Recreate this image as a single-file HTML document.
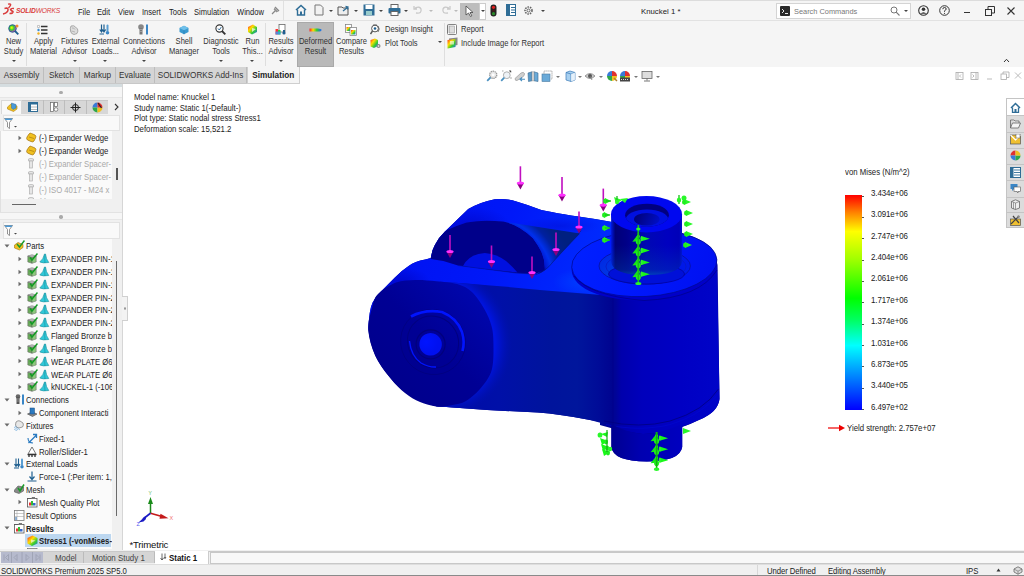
<!DOCTYPE html>
<html><head><meta charset="utf-8">
<style>
*{margin:0;padding:0;box-sizing:border-box}
html,body{width:1024px;height:576px;overflow:hidden;background:#fff;font-family:"Liberation Sans",sans-serif;color:#222;font-size:8px}
.a{position:absolute;white-space:nowrap}
.arr{width:0;height:0;border-left:2px solid transparent;border-right:2px solid transparent;border-top:2px solid #444}
.menu{top:8px;font-size:8.8px;color:#222;line-height:9px;transform:scaleX(0.86);transform-origin:0 0}
.rb{font-size:8.7px;color:#333;text-align:center;line-height:10px;transform:scaleX(0.87);transform-origin:50% 0}
.rb2{font-size:8.7px;color:#333;line-height:9px;transform:scaleX(0.87);transform-origin:0 0}
.tab{position:absolute;top:67px;white-space:nowrap;height:16px;background:#d5d5d5;border-right:1px solid #bdbdbd;font-size:8.2px;color:#333;text-align:center;line-height:18px}
.tr{font-size:8.9px;line-height:10px;color:#222;transform:scaleX(0.87);transform-origin:0 0}
.vt{font-size:9px;line-height:10px;color:#222;transform:scaleX(0.865);transform-origin:0 0}
.lg{font-size:9.1px;letter-spacing:-0.1px;line-height:10px;color:#222;transform:scaleX(0.87);transform-origin:0 0}
.bt{font-size:9px;line-height:10px;color:#444;transform:scaleX(0.88);transform-origin:0 0}
.st{font-size:9px;line-height:10px;color:#222;letter-spacing:-0.1px;transform:scaleX(0.86);transform-origin:0 0}
</style></head><body>
<!-- backgrounds -->
<div class="a" style="left:0;top:0;width:1024px;height:21px;background:#f5f5f5;border-bottom:1px solid #e2e2e2"></div>
<div class="a" style="left:0;top:21px;width:1024px;height:46px;background:#f5f5f5"></div>
<div class="a" style="left:0;top:67px;width:1024px;height:1.5px;background:#d6d6d6"></div>
<div class="a" style="left:0;top:67px;width:1024px;height:17px;background:#fff"></div>
<div class="a" style="left:0;top:84px;width:122px;height:466px;background:#f0f0f0"></div>
<div class="tab" style="left:0;width:44px">Assembly</div>
<div class="tab" style="left:44px;width:36px">Sketch</div>
<div class="tab" style="left:80px;width:36px">Markup</div>
<div class="tab" style="left:116px;width:39px">Evaluate</div>
<div class="tab" style="left:155px;width:92px">SOLIDWORKS Add-Ins</div>
<div class="tab" style="left:246.5px;width:53.5px;background:#f5f5f5;font-weight:bold;border:1px solid #cfcfcf;border-top:none;height:16.5px;color:#222;line-height:18px">Simulation</div>
<div class="a" style="left:0;top:83px;width:247px;height:1px;background:#c8c8c8"></div>
<!-- ============ TITLE BAR ============ -->
<div class="a" style="left:0;top:0;width:1024px;height:1px;background:#dcdcdc"></div>
<svg class="a" style="left:2px;top:3px" width="13" height="12" viewBox="0 0 13 12">
<path d="M6 1.2 Q9.5 0.5 8.5 2.5 L6.5 5.2" stroke="#d93b3b" stroke-width="1.3" fill="none"/>
<path d="M2.5 5.5 L4.5 5 Q7 5.5 5.5 8.5 Q4 10.5 1 11" stroke="#d93b3b" stroke-width="1.5" fill="none"/>
<path d="M12 5.5 Q9 5 8.5 6.5 Q9.5 8 11 8.5 Q11.5 10.5 7.5 10.5" stroke="#d93b3b" stroke-width="1.5" fill="none"/>
</svg>
<div class="a" style="left:16px;top:6.5px;color:#d93b3b;font-size:7.8px;font-style:italic;letter-spacing:-0.2px;line-height:8px;transform:scaleX(0.86);transform-origin:0 0"><b>SOLID</b>WORKS</div>
<div class="a menu" style="left:78px">File</div>
<div class="a menu" style="left:97px">Edit</div>
<div class="a menu" style="left:118px">View</div>
<div class="a menu" style="left:142px">Insert</div>
<div class="a menu" style="left:169px">Tools</div>
<div class="a menu" style="left:194px">Simulation</div>
<div class="a menu" style="left:236.5px">Window</div>
<svg class="a" style="left:271px;top:6px" width="9" height="9" viewBox="0 0 9 9"><path d="M4 1 L8 5 M3 3 L6 6 M1 8 L4 5" stroke="#888" stroke-width="1.2" fill="none"/><path d="M3.5 1.5 L7.5 5.5 L6 6 L3 3z" fill="#999"/></svg>
<div class="a" style="left:283px;top:1px;width:1px;height:19px;background:#e0e0e0"></div>
<!-- quick access -->
<svg class="a" style="left:295px;top:4px" width="12" height="12" viewBox="0 0 12 12"><path d="M1 6 L6 1.5 L11 6" stroke="#2f6d96" stroke-width="1.6" fill="none"/><path d="M2.5 5.5 V11 H9.5 V5.5" stroke="#2f6d96" stroke-width="1.4" fill="none"/><rect x="5" y="7.5" width="2" height="3.5" fill="#2f6d96"/></svg>
<svg class="a" style="left:314px;top:4px" width="10" height="12" viewBox="0 0 10 12"><path d="M1 1 H6.5 L9 3.5 V11 H1z" stroke="#777" stroke-width="1" fill="#f2f2f2"/></svg>
<svg class="a" style="left:337px;top:4px" width="13" height="12" viewBox="0 0 13 12"><path d="M1 3 H5 L6 4 H11 V11 H1z" stroke="#555" stroke-width="1" fill="#eee"/><path d="M6 7 L11 3 M8.5 2.5 L11 3 L10.5 5.5" stroke="#2f6d96" stroke-width="1.3" fill="none"/></svg>
<svg class="a" style="left:363px;top:4px" width="12" height="12" viewBox="0 0 12 12"><rect x="0.5" y="0.5" width="11" height="11" fill="#2f6d96"/><rect x="2.5" y="1" width="7" height="4" fill="#fff"/><rect x="3" y="7" width="6" height="4" fill="#9cc"/></svg>
<svg class="a" style="left:388px;top:4px" width="13" height="12" viewBox="0 0 13 12"><rect x="3" y="0.5" width="7" height="4" fill="#fff" stroke="#666"/><rect x="0.5" y="4" width="12" height="5.5" rx="1" fill="#2f6d96"/><rect x="3" y="7.5" width="7" height="4" fill="#fff" stroke="#666"/></svg>
<svg class="a" style="left:413px;top:5px" width="10" height="10" viewBox="0 0 10 10"><path d="M3 8 Q9 9 8 4 Q7 1 2 3 M1 1 V4 H4" stroke="#c9c9c9" stroke-width="1.3" fill="none"/></svg>
<svg class="a" style="left:441px;top:5px" width="10" height="10" viewBox="0 0 10 10"><path d="M7 8 Q1 9 2 4 Q3 1 8 3 M9 1 V4 H6" stroke="#c9c9c9" stroke-width="1.3" fill="none"/></svg>
<div class="a" style="left:460px;top:3px;width:19px;height:17px;background:#bdbdbd"></div>
<div class="a" style="left:479px;top:3px;width:7px;height:17px;background:#fff;border:1px solid #ccc"></div>
<svg class="a" style="left:465px;top:5px" width="9" height="12" viewBox="0 0 9 12"><path d="M1 1 V10 L3.5 8 L5.5 11.5 L6.8 10.8 L5 7.5 H8z" fill="#fff" stroke="#444" stroke-width="0.8"/></svg>
<svg class="a" style="left:490px;top:4px" width="7" height="13" viewBox="0 0 7 13"><rect x="0.5" y="0.5" width="6" height="12" rx="3" fill="#222"/><circle cx="3.5" cy="3.3" r="1.6" fill="#e02020"/><circle cx="3.5" cy="6.5" r="1.3" fill="#4a1a1a"/><circle cx="3.5" cy="9.7" r="1.6" fill="#2a8a2a"/></svg>
<svg class="a" style="left:506px;top:4px" width="10" height="12" viewBox="0 0 10 12"><rect x="0.5" y="0.5" width="9" height="11" fill="#fff" stroke="#2f6d96"/><rect x="1" y="1" width="3" height="10" fill="#2f6d96"/><path d="M5 3.5 H9 M5 6 H9 M5 8.5 H9" stroke="#2f6d96"/></svg>
<svg class="a" style="left:523px;top:5px" width="11" height="11" viewBox="0 0 11 11"><circle cx="5.5" cy="5.5" r="3.5" fill="none" stroke="#666" stroke-width="1.6" stroke-dasharray="1.5 1"/><circle cx="5.5" cy="5.5" r="1.5" fill="none" stroke="#666" stroke-width="1"/></svg>
<div class="a arr" style="left:329px;top:10px"></div>
<div class="a arr" style="left:354px;top:10px"></div>
<div class="a arr" style="left:379px;top:10px"></div>
<div class="a arr" style="left:404px;top:10px"></div>
<div class="a arr" style="left:429px;top:10px;border-top-color:#bbb"></div>
<div class="a arr" style="left:454px;top:10px;border-top-color:#bbb"></div>
<div class="a arr" style="left:481px;top:10px"></div>
<div class="a arr" style="left:541px;top:10px"></div>
<div class="a" style="left:641px;top:6.5px;font-size:7.8px;line-height:9px;color:#222">Knuckel 1 *</div>
<!-- search -->
<div class="a" style="left:776px;top:3px;width:135px;height:16px;background:#fff;border:1px solid #d4d4d4"></div>
<svg class="a" style="left:780px;top:6px" width="10" height="10" viewBox="0 0 10 10"><rect width="10" height="10" rx="1" fill="#2b2b2b"/><path d="M2 3 L4 5 L2 7 M5 7.5 H8" stroke="#fff" stroke-width="0.9" fill="none"/></svg>
<div class="a" style="left:794px;top:6.5px;font-size:7.4px;color:#777">Search Commands</div>
<svg class="a" style="left:890px;top:5.5px" width="10" height="10" viewBox="0 0 10 10"><circle cx="4" cy="4" r="3" fill="none" stroke="#777" stroke-width="1"/><path d="M6.2 6.2 L9.5 9.5" stroke="#777" stroke-width="1.1"/></svg>
<div class="a arr" style="left:904px;top:10px"></div>
<svg class="a" style="left:918px;top:5px" width="11" height="11" viewBox="0 0 11 11"><circle cx="5.5" cy="5.5" r="4.8" fill="none" stroke="#333" stroke-width="1.1"/><circle cx="5.5" cy="4.3" r="1.8" fill="#333"/><path d="M2.3 8.8 Q5.5 5.5 8.7 8.8" fill="#333"/></svg>
<svg class="a" style="left:939px;top:5px" width="11" height="11" viewBox="0 0 11 11"><circle cx="5.5" cy="5.5" r="4.8" fill="none" stroke="#333" stroke-width="1"/><path d="M3.8 4.2 Q3.8 2.5 5.5 2.5 Q7.2 2.5 7.2 4 Q7.2 5 5.5 5.8 V6.8" stroke="#333" stroke-width="1" fill="none"/><circle cx="5.5" cy="8.3" r="0.6" fill="#333"/></svg>
<div class="a" style="left:964px;top:12px;width:6px;height:1px;background:#333"></div>
<svg class="a" style="left:985px;top:6px" width="10" height="10" viewBox="0 0 10 10"><rect x="0.5" y="3.5" width="6" height="6" fill="none" stroke="#333"/><path d="M3 3.5 V0.5 H9.5 V7 H6.5" fill="none" stroke="#333"/></svg>
<svg class="a" style="left:1007px;top:7px" width="8" height="8" viewBox="0 0 8 8"><path d="M0.5 0.5 L7.5 7.5 M7.5 0.5 L0.5 7.5" stroke="#333" stroke-width="1.1"/></svg>

<svg class="a" style="left:1003px;top:58px" width="7" height="5" viewBox="0 0 7 5"><path d="M1 4 L3.5 1.3 L6 4" stroke="#333" stroke-width="1" fill="none"/></svg>

<!-- ============ RIBBON ============ -->
<div class="a" style="left:26px;top:23px;width:1px;height:43px;background:#dedede"></div>
<div class="a" style="left:265px;top:23px;width:1px;height:43px;background:#dedede"></div>
<div class="a" style="left:444px;top:23px;width:1px;height:43px;background:#dedede"></div>
<div class="a" style="left:297px;top:22px;width:37px;height:45px;background:#b9b9b9;border:1px solid #a9a9a9"></div>
<div class="a rb" style="left:-7px;top:36px;width:41px">New<br>Study</div>
<div class="a rb" style="left:23px;top:36px;width:41px">Apply<br>Material</div>
<div class="a rb" style="left:52px;top:36px;width:45px">Fixtures<br>Advisor</div>
<div class="a rb" style="left:83px;top:36px;width:45px">External<br>Loads...</div>
<div class="a rb" style="left:118px;top:36px;width:52px">Connections<br>Advisor</div>
<div class="a rb" style="left:159px;top:36px;width:50px">Shell<br>Manager</div>
<div class="a rb" style="left:195px;top:36px;width:52px">Diagnostic<br>Tools</div>
<div class="a rb" style="left:232px;top:36px;width:41px">Run<br>This...</div>
<div class="a rb" style="left:259px;top:36px;width:44px">Results<br>Advisor</div>
<div class="a rb" style="left:292px;top:36px;width:47px">Deformed<br>Result</div>
<div class="a rb" style="left:328px;top:36px;width:47px">Compare<br>Results</div>
<div class="a rb2" style="left:384.5px;top:24.5px">Design Insight</div>
<div class="a rb2" style="left:384.5px;top:38.5px">Plot Tools</div>
<div class="a rb2" style="left:460.5px;top:24.5px">Report</div>
<div class="a rb2" style="left:460.5px;top:38.5px">Include Image for Report</div>
<div class="a arr" style="left:11.5px;top:59.5px"></div>
<div class="a arr" style="left:72.5px;top:59.5px"></div>
<div class="a arr" style="left:103px;top:59.5px"></div>
<div class="a arr" style="left:141.5px;top:59.5px"></div>
<div class="a arr" style="left:218.5px;top:59.5px"></div>
<div class="a arr" style="left:250px;top:59.5px"></div>
<div class="a arr" style="left:279px;top:59.5px"></div>
<div class="a arr" style="left:438px;top:41px"></div>
<!-- ribbon icons -->
<svg class="a" style="left:8px;top:24px" width="11" height="11" viewBox="0 0 11 11"><defs><radialGradient id="rg1" cx="0.4" cy="0.4" r="0.6"><stop offset="0" stop-color="#ff0"/><stop offset="0.5" stop-color="#3c3"/><stop offset="1" stop-color="#c3c"/></radialGradient></defs><circle cx="4.5" cy="4.5" r="3.8" fill="url(#rg1)" stroke="#1f5f8f" stroke-width="0.9"/><path d="M7 7 L10.3 10.3" stroke="#1f5f8f" stroke-width="1.8"/><circle cx="9" cy="2" r="1.5" fill="#f08a30"/></svg>
<svg class="a" style="left:37px;top:25px" width="11" height="10" viewBox="0 0 11 10"><circle cx="1.5" cy="1.5" r="1.2" fill="#fff" stroke="#888" stroke-width="0.6"/><circle cx="1.5" cy="5" r="1.2" fill="#3a8dd0"/><circle cx="1.5" cy="8.5" r="1.2" fill="#f0b020"/><path d="M4 1.5 H10.5 M4 5 H10.5 M4 8.5 H10.5" stroke="#333" stroke-width="1.3"/></svg>
<svg class="a" style="left:69px;top:25px" width="10" height="10" viewBox="0 0 10 10"><path d="M2 1 Q5 0 6.5 2 L8.5 4 Q9.5 6 8 8.5 L5 9.5 Q2 9 1.5 6 Q1 3 2 1z" fill="#ddd" stroke="#999" stroke-width="0.8"/><path d="M3 3 Q5 2.5 6 4.5 M2.5 6 L6 7" stroke="#999" stroke-width="0.6" fill="none"/></svg>
<svg class="a" style="left:99px;top:24px" width="11" height="11" viewBox="0 0 11 11"><path d="M2.5 0.5 V7.5 M0.8 5.5 L2.5 8 L4.2 5.5 M0.5 10 H5" stroke="#1f5f8f" stroke-width="1.2" fill="none"/><path d="M5 0.5 V7.5 M3.3 5.5 L5 8 L6.7 5.5" stroke="#1f5f8f" stroke-width="1.2" fill="none"/><rect x="7.5" y="0.5" width="2" height="7" rx="1" fill="#5a9fd4"/><circle cx="8.5" cy="8.8" r="1.8" fill="#3a86c6"/></svg>
<svg class="a" style="left:137px;top:24px" width="12" height="11" viewBox="0 0 12 11"><circle cx="4" cy="3" r="2.8" fill="#888"/><rect x="2.5" y="4" width="3" height="6.5" fill="#777"/><path d="M2.5 5.5 H5.5 M2.5 7.5 H5.5" stroke="#bbb" stroke-width="0.6"/><rect x="9" y="0.5" width="2" height="10" fill="#3a86c6"/></svg>
<svg class="a" style="left:179px;top:25px" width="10" height="10" viewBox="0 0 10 10"><path d="M0.5 3 L5 0.8 L9.5 3 V7 L5 9.2 L0.5 7z" fill="#3a9ad0"/><path d="M0.5 3 L5 5.2 L9.5 3 L5 0.8z" fill="#6fc0ea"/><path d="M5 5.2 V9.2" stroke="#2a7ab0" stroke-width="0.6"/></svg>
<svg class="a" style="left:215px;top:24px" width="11" height="11" viewBox="0 0 11 11"><circle cx="4.5" cy="4.5" r="3.6" fill="#fff" stroke="#333" stroke-width="1.1"/><path d="M7 7 L10.3 10.3" stroke="#333" stroke-width="1.8"/><path d="M3 4.5 L4.3 6 L6.3 3" stroke="#1f5f8f" stroke-width="0.9" fill="none"/></svg>
<svg class="a" style="left:247px;top:24px" width="11" height="11" viewBox="0 0 11 11"><defs><linearGradient id="lg2" x1="0" y1="0" x2="1" y2="1"><stop offset="0" stop-color="#f22"/><stop offset="0.35" stop-color="#fd0"/><stop offset="0.65" stop-color="#3c3"/><stop offset="1" stop-color="#26f"/></linearGradient></defs><path d="M1 3 L6 0.5 L10 3 V8 L5 10.5 L1 8z" fill="url(#lg2)"/><path d="M5 4 L9 5 L5 8" fill="#fff" opacity="0.7"/></svg>
<svg class="a" style="left:275px;top:24px" width="12" height="11" viewBox="0 0 12 11"><rect x="4" y="0.5" width="6" height="7.5" fill="#fff" stroke="#666" stroke-width="0.8"/><rect x="0.5" y="5" width="2.5" height="5.5" fill="#f33"/><rect x="3" y="6" width="2.5" height="4.5" fill="#3c3"/><rect x="0.5" y="7.5" width="5" height="3" fill="#39f" opacity="0.8"/><rect x="8" y="6" width="2" height="4" fill="#1f5f8f"/><circle cx="9" cy="9" r="1.6" fill="#1f5f8f"/></svg>
<svg class="a" style="left:309px;top:27px" width="13" height="6" viewBox="0 0 13 6"><defs><linearGradient id="lg3" x1="0" x2="1"><stop offset="0" stop-color="#f22"/><stop offset="0.3" stop-color="#fd0"/><stop offset="0.6" stop-color="#3c3"/><stop offset="1" stop-color="#26f"/></linearGradient></defs><path d="M0.5 1.5 H9 Q12.5 1.5 12.5 3 Q12.5 4.5 9 4.5 H0.5z" fill="url(#lg3)"/></svg>
<svg class="a" style="left:345px;top:24px" width="12" height="12" viewBox="0 0 12 12"><rect x="0.5" y="0.5" width="6" height="8" fill="#fff" stroke="#777" stroke-width="0.7"/><rect x="1.5" y="3" width="4" height="4" fill="url(#lg2)"/><rect x="5" y="3.5" width="6.5" height="8" fill="#fff" stroke="#777" stroke-width="0.7"/><rect x="6" y="6" width="4.5" height="4.5" fill="url(#lg2)"/></svg>
<svg class="a" style="left:370px;top:24px" width="11" height="11" viewBox="0 0 11 11"><circle cx="5" cy="4.5" r="3.4" fill="#fff" stroke="#555" stroke-width="1"/><path d="M2.5 7 L0.5 10" stroke="#555" stroke-width="1.4"/><path d="M3 1 H7 M8 2 Q10.5 5 8 8" stroke="#555" stroke-width="0.8" fill="none"/><circle cx="5" cy="4.5" r="1.3" fill="#1f5f8f"/></svg>
<svg class="a" style="left:370px;top:38px" width="11" height="11" viewBox="0 0 11 11"><path d="M0.5 2 L5 0.5 L8 2 V8 L4 10 L0.5 8.5z" fill="url(#lg2)"/><circle cx="8.5" cy="8" r="2" fill="#888"/><circle cx="8.5" cy="8" r="0.8" fill="#fff"/></svg>
<svg class="a" style="left:447px;top:24px" width="10" height="11" viewBox="0 0 10 11"><rect x="0.5" y="0.5" width="9" height="10" rx="1" fill="#fff" stroke="#666" stroke-width="0.8"/><rect x="2.5" y="2" width="5" height="7" fill="#ddd" stroke="#888" stroke-width="0.5"/><path d="M0.5 2 H1.5 M0.5 4 H1.5 M0.5 6 H1.5 M0.5 8 H1.5" stroke="#333" stroke-width="0.6"/></svg>
<svg class="a" style="left:447px;top:37px" width="11" height="12" viewBox="0 0 11 12"><path d="M2 1.5 L10.5 0.5 V8 L2 10z" fill="#888"/><path d="M0.5 3 L8.5 2 V10 L0.5 11.5z" fill="url(#lg2)"/><rect x="3" y="4" width="4" height="3.5" fill="#fff" opacity="0.6"/></svg>

<!-- ============ VIEWPORT OVERLAYS ============ -->
<div class="a vt" style="left:134px;top:91.9px">Model name: Knuckel 1</div>
<div class="a vt" style="left:134px;top:102.7px">Study name: Static 1(-Default-)</div>
<div class="a vt" style="left:134px;top:113.4px">Plot type: Static nodal stress Stress1</div>
<div class="a vt" style="left:134px;top:124px">Deformation scale: 15,521.2</div>
<!-- legend -->
<div class="a vt" style="left:845px;top:167px">von Mises (N/m^2)</div>
<div class="a" style="left:845px;top:195px;width:17px;height:215px;background:linear-gradient(to bottom,#ff0000 0%,#ff8000 8%,#ffff00 17%,#a0ff00 30%,#00ff00 48%,#00ff60 58%,#00ffff 70%,#0090ff 83%,#0000ff 100%)"></div>
<div class="a lg" style="left:871px;top:188.0px">3.434e+06</div>
<div class="a" style="left:862px;top:195.5px;width:2px;height:1px;background:#555"></div>
<div class="a lg" style="left:871px;top:209.3px">3.091e+06</div>
<div class="a" style="left:862px;top:216.8px;width:2px;height:1px;background:#555"></div>
<div class="a lg" style="left:871px;top:230.7px">2.747e+06</div>
<div class="a" style="left:862px;top:238.2px;width:2px;height:1px;background:#555"></div>
<div class="a lg" style="left:871px;top:252.1px">2.404e+06</div>
<div class="a" style="left:862px;top:259.6px;width:2px;height:1px;background:#555"></div>
<div class="a lg" style="left:871px;top:273.4px">2.061e+06</div>
<div class="a" style="left:862px;top:280.9px;width:2px;height:1px;background:#555"></div>
<div class="a lg" style="left:871px;top:294.8px">1.717e+06</div>
<div class="a" style="left:862px;top:302.2px;width:2px;height:1px;background:#555"></div>
<div class="a lg" style="left:871px;top:316.1px">1.374e+06</div>
<div class="a" style="left:862px;top:323.6px;width:2px;height:1px;background:#555"></div>
<div class="a lg" style="left:871px;top:337.5px">1.031e+06</div>
<div class="a" style="left:862px;top:345.0px;width:2px;height:1px;background:#555"></div>
<div class="a lg" style="left:871px;top:358.8px">6.873e+05</div>
<div class="a" style="left:862px;top:366.3px;width:2px;height:1px;background:#555"></div>
<div class="a lg" style="left:871px;top:380.1px">3.440e+05</div>
<div class="a" style="left:862px;top:387.6px;width:2px;height:1px;background:#555"></div>
<div class="a lg" style="left:871px;top:401.5px">6.497e+02</div>
<div class="a" style="left:862px;top:409.0px;width:2px;height:1px;background:#555"></div>
<svg class="a" style="left:828px;top:424px" width="18" height="8" viewBox="0 0 18 8"><path d="M0 4 H12" stroke="#e00" stroke-width="1.2"/><path d="M11 0.8 L17 4 L11 7.2z" fill="#e00"/></svg>
<div class="a vt" style="left:847px;top:423px">Yield strength: 2.757e+07</div>
<!-- triad -->
<svg class="a" style="left:128px;top:484px" width="60" height="48" viewBox="128 484 60 48">
<path d="M150.5 513.3 V502" stroke="#1a8a1a" stroke-width="1.5"/><path d="M148 504 L150.5 497 L153 504z" fill="#1a8a1a"/>
<path d="M150.5 513.3 L162 516.5" stroke="#c41a1a" stroke-width="1.7"/><path d="M160.5 513.8 L168.5 518.2 L159.5 518.8z" fill="#c41a1a"/>
<path d="M150.5 513.3 L143 519" stroke="#1a1ac4" stroke-width="1.7"/><path d="M145.5 516 L138.5 522.5 L143.5 521.5 L146 519z" fill="#1a1ac4"/>
<text x="148.6" y="494.5" font-size="5" fill="#5ab85a" font-family="Liberation Sans">Y</text>
<text x="169.5" y="520" font-size="5.5" fill="#f07070" font-family="Liberation Sans">X</text>
<text x="136.5" y="526" font-size="5.5" fill="#5a5af0" font-family="Liberation Sans">Z</text>
</svg>
<div class="a" style="left:129.5px;top:538.5px;font-size:9.6px;line-height:11px;color:#111;letter-spacing:-0.2px">*Trimetric</div>
<!-- view toolbar -->
<svg class="a" style="left:486px;top:70px" width="12" height="12" viewBox="0 0 12 12"><circle cx="7.2" cy="4.8" r="3.6" fill="#e8e8e8" stroke="#9a9a9a" stroke-width="1.3" stroke-dasharray="1.4 0.6"/><circle cx="7.2" cy="4.8" r="1.4" fill="#fff"/><path d="M4.6 7.4 L1.2 10.8" stroke="#4a90c0" stroke-width="1.8"/></svg>
<svg class="a" style="left:500px;top:70px" width="12" height="12" viewBox="0 0 12 12"><circle cx="6.8" cy="5.2" r="3.4" fill="#eef2f6" stroke="#a8a8a8" stroke-width="0.9"/><path d="M4.3 7.7 L1.2 10.8" stroke="#4a90c0" stroke-width="1.8"/><path d="M2 1 H3.5 M9 0.8 H11 V2.5 M11 7 V9" stroke="#888" stroke-width="0.7"/></svg>
<svg class="a" style="left:514px;top:70px" width="12" height="12" viewBox="0 0 12 12"><path d="M1 8.5 L7 3 Q9.5 1.5 10.5 3.5 Q11 5.5 8 7.5 L3 10.5 Q1 11 1 8.5z" fill="#d0d0d0" stroke="#9a9a9a" stroke-width="0.7"/><path d="M6 9.3 H11 M8 7.5 L6 9.3 L8 11" stroke="#4a90c0" stroke-width="1.1" fill="none"/></svg>
<svg class="a" style="left:527px;top:70px" width="12" height="12" viewBox="0 0 12 12"><path d="M1 3 L5 1.8 V10.8 L1.5 11.5z" fill="#5a9ac8" stroke="#3a6a90" stroke-width="0.6"/><path d="M7 1.8 L11 3 V11.5 L7 10.8z" fill="#6aaad8" stroke="#3a6a90" stroke-width="0.6"/><path d="M5 1.8 H7 V10.8 H5z" fill="#e0e0e0" stroke="#999" stroke-width="0.5"/></svg>
<svg class="a" style="left:541px;top:70px" width="12" height="12" viewBox="0 0 12 12"><rect x="1" y="4" width="8" height="7.5" fill="#6aaad8" stroke="#4a7aa0" stroke-width="0.6"/><path d="M3 3.5 V1 H11 V9 H9.5" fill="none" stroke="#777" stroke-width="0.7" stroke-dasharray="1.2 0.8"/></svg>
<svg class="a" style="left:565px;top:70px" width="11" height="12" viewBox="0 0 11 12"><path d="M1 2.5 L5 1 L10 2.5 V10 L6 11.5 L1 10z" fill="#a8d0f0" stroke="#3a7ab8" stroke-width="0.7"/><path d="M1 2.5 L6 4 L10 2.5 M6 4 V11.5" stroke="#3a7ab8" stroke-width="0.7" fill="none"/><path d="M6 4 L10 2.5 V10 L6 11.5z" fill="#fff" opacity="0.7"/></svg>
<svg class="a" style="left:584px;top:71px" width="12" height="10" viewBox="0 0 12 10"><path d="M1 5 Q6 0 11 5 Q6 10 1 5z" fill="#ccc" stroke="#777" stroke-width="0.7"/><circle cx="6" cy="5" r="2" fill="#555"/><path d="M6 5 L8 9" stroke="#777" stroke-width="0.8"/></svg>
<svg class="a" style="left:606px;top:70px" width="12" height="12" viewBox="0 0 12 12"><path d="M6 6 L6 1 A5 5 0 0 0 1 6z" fill="#3a7ad8"/><path d="M6 6 L1 6 A5 5 0 0 0 6 11z" fill="#2ea84a"/><path d="M6 6 L6 11 A5 5 0 0 0 11 6z" fill="#f0c020"/><path d="M6 6 L11 6 A5 5 0 0 0 6 1z" fill="#e03030"/><path d="M8 8 L11 11" stroke="#b08030" stroke-width="1.5"/></svg>
<svg class="a" style="left:619px;top:70px" width="12" height="12" viewBox="0 0 12 12"><path d="M6 6 L6 1 A5 5 0 0 0 1 6z" fill="#3a7ad8"/><path d="M6 6 L1 6 A5 5 0 0 0 6 11z" fill="#2ea84a"/><path d="M6 6 L6 11 A5 5 0 0 0 11 6z" fill="#f0c020"/><path d="M6 6 L11 6 A5 5 0 0 0 6 1z" fill="#e03030"/><rect x="1" y="7.5" width="10" height="4" fill="#444"/><path d="M2 9.5 H10" stroke="#fff" stroke-width="0.8" stroke-dasharray="1 1"/></svg>
<svg class="a" style="left:641px;top:70px" width="12" height="12" viewBox="0 0 12 12"><rect x="1" y="1.5" width="10" height="7" fill="#ddd" stroke="#666" stroke-width="0.8"/><path d="M6 8.5 V10.5 M3 11 H9" stroke="#666" stroke-width="0.9"/></svg>
<div class="a arr" style="left:556px;top:75.5px;border-top-color:#777"></div>
<div class="a arr" style="left:578px;top:75.5px;border-top-color:#777"></div>
<div class="a arr" style="left:599px;top:75.5px;border-top-color:#777"></div>
<div class="a arr" style="left:634px;top:75.5px;border-top-color:#777"></div>
<div class="a arr" style="left:656px;top:75.5px;border-top-color:#777"></div>
<!-- viewport window controls -->
<svg class="a" style="left:952px;top:70px" width="72" height="12" viewBox="0 0 72 12"><g stroke="#aaa" stroke-width="0.8" fill="none">
<rect x="4" y="2.5" width="7" height="7"/><path d="M6 2.5 V9.5 M9 4.5 L7.5 6 L9 7.5"/>
<rect x="19" y="2.5" width="7" height="7"/><path d="M24 2.5 V9.5 M20.5 4.5 L22 6 L20.5 7.5"/>
<path d="M35 9 H40"/>
<rect x="49" y="4" width="5.5" height="5.5"/><path d="M51 4 V2 H57 V7.5 H54.5"/>
<path d="M63 2.5 L69 8.5 M69 2.5 L63 8.5"/></g></svg>
<!-- right task pane -->
<div class="a" style="left:1006px;top:98px;width:18px;height:130px;background:#dcdcdc;border:1px solid #c4c4c4;border-right:none"></div>
<div class="a" style="left:1007px;top:99px;width:17px;height:16.3px;background:#fff"></div>
<div class="a" style="left:1007px;top:115.3px;width:17px;height:1px;background:#c4c4c4"></div>
<div class="a" style="left:1007px;top:131.5px;width:17px;height:1px;background:#c4c4c4"></div>
<div class="a" style="left:1007px;top:147.8px;width:17px;height:1px;background:#c4c4c4"></div>
<div class="a" style="left:1007px;top:164.0px;width:17px;height:1px;background:#c4c4c4"></div>
<div class="a" style="left:1007px;top:180.3px;width:17px;height:1px;background:#c4c4c4"></div>
<div class="a" style="left:1007px;top:196.5px;width:17px;height:1px;background:#c4c4c4"></div>
<div class="a" style="left:1007px;top:212.3px;width:17px;height:1px;background:#c4c4c4"></div>
<svg class="a" style="left:1010px;top:101.7px" width="11" height="11" viewBox="0 0 11 11"><path d="M1 6 L5.5 1.5 L10 6" stroke="#2f6d96" stroke-width="1.5" fill="none"/><path d="M2.5 5.5 V10.5 H8.5 V5.5" stroke="#2f6d96" stroke-width="1.3" fill="none"/><rect x="4.5" y="7" width="2" height="3.5" fill="#2f6d96"/></svg>
<svg class="a" style="left:1010px;top:117.9px" width="11" height="11" viewBox="0 0 11 11"><path d="M0.5 2 H4 L5 3 H9 V5 M0.5 2 V10 H8.5 L10.5 5 H2.5 L0.5 10" stroke="#666" stroke-width="0.8" fill="#f5f5f5"/></svg>
<svg class="a" style="left:1010px;top:134.2px" width="11" height="11" viewBox="0 0 11 11"><rect x="0.5" y="1" width="10" height="9" fill="#f0c030" stroke="#555" stroke-width="0.7"/><path d="M0.5 1 L5.5 6 L10.5 1" stroke="#fff" stroke-width="1.2" fill="none"/><rect x="6" y="0" width="4" height="4" fill="#fff" stroke="#555" stroke-width="0.5"/></svg>
<svg class="a" style="left:1010px;top:150.4px" width="11" height="11" viewBox="0 0 11 11"><path d="M5.5 5.5 L5.5 0.5 A5 5 0 0 0 0.5 5.5z" fill="#e03030"/><path d="M5.5 5.5 L0.5 5.5 A5 5 0 0 0 5.5 10.5z" fill="#3a7ad8"/><path d="M5.5 5.5 L5.5 10.5 A5 5 0 0 0 10.5 5.5z" fill="#2ea84a"/><path d="M5.5 5.5 L10.5 5.5 A5 5 0 0 0 5.5 0.5z" fill="#f0c020"/></svg>
<svg class="a" style="left:1010px;top:166.7px" width="11" height="11" viewBox="0 0 11 11"><rect x="0.5" y="0.5" width="10" height="10" fill="#fff" stroke="#2f6d96"/><rect x="0.5" y="0.5" width="3" height="10" fill="#2f6d96"/><path d="M4 3 H10 M4 5.5 H10 M4 8 H10" stroke="#2f6d96" stroke-width="0.9"/></svg>
<svg class="a" style="left:1010px;top:182.9px" width="11" height="11" viewBox="0 0 11 11"><rect x="0.5" y="1" width="7" height="5" fill="#3a86c6"/><path d="M2 6 L2 8 L4 6" fill="#3a86c6"/><rect x="4" y="4" width="6.5" height="4.5" fill="#fff" stroke="#555" stroke-width="0.6"/><path d="M8 8.5 V10 L6.5 8.5" stroke="#555" stroke-width="0.6" fill="#fff"/></svg>
<svg class="a" style="left:1010px;top:198.9px" width="11" height="11" viewBox="0 0 11 11"><path d="M1.5 2.5 L5.5 0.8 L9.5 2.5 V9 L5.5 10.5 L1.5 9z" fill="#eee" stroke="#666" stroke-width="0.8"/><path d="M1.5 2.5 L5.5 4 L9.5 2.5 M5.5 4 V10.5 M3.5 3.3 V9.8" stroke="#666" stroke-width="0.6" fill="none"/></svg>
<svg class="a" style="left:1010px;top:214.7px" width="11" height="11" viewBox="0 0 11 11"><rect x="0.5" y="4" width="10" height="6.5" fill="#f0c030" stroke="#555" stroke-width="0.7"/><path d="M1 9 L9 1 M3 1 L9 8" stroke="#444" stroke-width="1.2"/><circle cx="8.5" cy="1.8" r="1.3" fill="#888"/></svg>

<svg class="a" style="left:0;top:0" width="1024" height="576" viewBox="0 0 1024 576">
<defs>
<linearGradient id="armFace" x1="460" y1="0" x2="720" y2="0" gradientUnits="userSpaceOnUse">
<stop offset="0" stop-color="#000ca8"/><stop offset="0.15" stop-color="#0010a8"/><stop offset="0.35" stop-color="#00149c"/><stop offset="0.45" stop-color="#00169c"/><stop offset="0.53" stop-color="#000c98"/><stop offset="0.585" stop-color="#000490"/><stop offset="0.6" stop-color="#000498"/><stop offset="0.62" stop-color="#0000ac"/><stop offset="0.7" stop-color="#0000bc"/><stop offset="0.85" stop-color="#0000c4"/><stop offset="1" stop-color="#0004c8"/>
</linearGradient>
<linearGradient id="topBright" x1="380" y1="200" x2="620" y2="290" gradientUnits="userSpaceOnUse">
<stop offset="0" stop-color="#0010f0"/><stop offset="0.5" stop-color="#0018f8"/><stop offset="1" stop-color="#0030ff"/>
</linearGradient>
<linearGradient id="flange" x1="580" y1="240" x2="716" y2="290" gradientUnits="userSpaceOnUse">
<stop offset="0" stop-color="#0020ff"/><stop offset="0.45" stop-color="#0018fc"/><stop offset="1" stop-color="#0010f0"/>
</linearGradient>
<linearGradient id="boss" x1="611" y1="0" x2="682" y2="0" gradientUnits="userSpaceOnUse">
<stop offset="0" stop-color="#0018e0"/><stop offset="0.06" stop-color="#000078"/><stop offset="0.22" stop-color="#000088"/><stop offset="0.5" stop-color="#0008b4"/><stop offset="0.8" stop-color="#0000c0"/><stop offset="0.96" stop-color="#0000b8"/><stop offset="1" stop-color="#0010d0"/></linearGradient>
<linearGradient id="bossbot" x1="0" y1="245" x2="0" y2="276" gradientUnits="userSpaceOnUse"><stop offset="0" stop-color="#0060a0" stop-opacity="0"/><stop offset="0.8" stop-color="#0060b0" stop-opacity="0.25"/><stop offset="1" stop-color="#00a0c0" stop-opacity="0.45"/></linearGradient>
<linearGradient id="bboss" x1="611" y1="0" x2="683" y2="0" gradientUnits="userSpaceOnUse">
<stop offset="0" stop-color="#000090"/><stop offset="0.4" stop-color="#0000b0"/><stop offset="1" stop-color="#0000c0"/>
</linearGradient>
<radialGradient id="web" cx="486" cy="284" r="90" gradientUnits="userSpaceOnUse">
<stop offset="0.665" stop-color="#00008a"/><stop offset="0.69" stop-color="#0018d0"/><stop offset="0.75" stop-color="#0030ec"/><stop offset="0.84" stop-color="#0020a0"/><stop offset="0.92" stop-color="#002088"/><stop offset="1" stop-color="#002080"/></radialGradient>
<radialGradient id="hole" cx="428" cy="340" r="12" gradientUnits="userSpaceOnUse"><stop offset="0" stop-color="#0014ff"/><stop offset="1" stop-color="#0010f0"/></radialGradient>
<linearGradient id="cbore" x1="0" y1="204" x2="0" y2="227" gradientUnits="userSpaceOnUse"><stop offset="0" stop-color="#000070"/><stop offset="0.42" stop-color="#0000a0"/><stop offset="0.5" stop-color="#0010e0"/><stop offset="1" stop-color="#0018f0"/></linearGradient>
<linearGradient id="ihole" x1="634" y1="213" x2="660" y2="226" gradientUnits="userSpaceOnUse"><stop offset="0" stop-color="#000070"/><stop offset="1" stop-color="#0010d0"/></linearGradient>
<radialGradient id="recess" cx="620" cy="280" r="50" gradientUnits="userSpaceOnUse"><stop offset="0" stop-color="#0040e0"/><stop offset="1" stop-color="#0018e8"/></radialGradient>
<radialGradient id="band" cx="0.5" cy="0.5" r="0.5"><stop offset="0.7" stop-color="#0014e0"/><stop offset="0.76" stop-color="#0012c8"/><stop offset="0.9" stop-color="#0010b0" stop-opacity="0"/></radialGradient>
<clipPath id="armclip"><path d="M440 281.7 Q480 284 540 290 L620 296.5 L620 428 L590 420 Q560 414 537.8 412.5 L487 410 L436.2 406.2 Z"/></clipPath>
<linearGradient id="lugface" x1="390" y1="390" x2="480" y2="300" gradientUnits="userSpaceOnUse"><stop offset="0" stop-color="#00008c"/><stop offset="0.5" stop-color="#000094"/><stop offset="1" stop-color="#0006ac"/></linearGradient>
<radialGradient id="hilite" cx="0.5" cy="0.5" r="0.5"><stop offset="0" stop-color="#0040ff" stop-opacity="0.9"/><stop offset="1" stop-color="#0040ff" stop-opacity="0"/></radialGradient>
<radialGradient id="shade" cx="0.5" cy="0.5" r="0.5"><stop offset="0" stop-color="#0000b8" stop-opacity="0.6"/><stop offset="1" stop-color="#0000b8" stop-opacity="0"/></radialGradient>
<clipPath id="backtopclip"><path d="M430.8 258.1 Q432 250 435 244.8 Q439 237 445 231.5 L468.2 209.1 Q480 202 494.8 199.2 Q506 198 516.4 201.6 Q528 205 541.3 210 Q560 214 595 219 L612 222 L612 236 L580 233.5 L503 221.6 Q483 219.5 466.5 222.4 Q455 226 447 230 Z"/></clipPath>
<clipPath id="topclip"><path d="M368.3 330 Q369 310 372.5 302.8 Q376 296 380.8 291.7 L394.7 277.8 Q401 271 408.6 266 Q415 261 425.3 259.4 L430.8 258.1 L458 265.5 L516 273 L536 274.2 Q546 271 552 263 L580 233.5 L612 234 L612 300 L540 290 L440 281.7 L380 300 Z"/></clipPath>
</defs>
<!-- base silhouette -->
<path d="M368.3 330 Q369 310 372.5 302.8 Q376 296 380.8 291.7 L394.7 277.8 Q401 271 408.6 266 Q415 261 425.3 259.4 L430.8 258.1 Q432 250 435 244.8 Q439 237 445 231.5 L468.2 209.1 Q480 202 494.8 199.2 Q506 198 516.4 201.6 Q528 205 541.3 210 Q560 214 595 219 L612 222 L612 214 L682 214 L682 233 Q700 238 710 247 Q717 255 717 263 L717.5 265 L719.5 399 Q718 412 700 419.5 Q690 424.5 682.2 427 L682.2 447 Q680 461.4 646.8 461.4 Q613 461.4 611.4 447 L611.4 424 L590 420 Q560 414 537.8 412.5 L487 410 L436.2 406.2 Q420 402 410.8 396 Q398 388 390.5 378.2 Q380 366 375.2 355.4 Q370 343 368.3 330 Z" fill="#000090"/>
<!-- top bright surfaces (back lug top, back arm top, front lug top, front arm top) -->
<path d="M368.3 330 Q369 310 372.5 302.8 Q376 296 380.8 291.7 L394.7 277.8 Q401 271 408.6 266 Q415 261 425.3 259.4 L430.8 258.1 Q432 250 435 244.8 Q439 237 445 231.5 L468.2 209.1 Q480 202 494.8 199.2 Q506 198 516.4 201.6 Q528 205 541.3 210 Q560 214 595 219 L612 222 L612 300 L500 287 L440 282 L380 300 Z" fill="url(#topBright)"/>
<g clip-path="url(#topclip)"><ellipse cx="585" cy="282" rx="32" ry="14" fill="url(#hilite)"/><ellipse cx="400" cy="282" rx="30" ry="16" fill="url(#shade)"/></g>
<g clip-path="url(#backtopclip)"><ellipse cx="470" cy="228" rx="42" ry="22" fill="url(#shade)"/><ellipse cx="560" cy="226" rx="40" ry="9" fill="url(#shade)" opacity="0.5"/></g>
<!-- dark inner face of back lug -->
<path d="M430.8 258.5 Q432 250 435 244.8 Q439 237 445 231.5 L447 230 Q455 226 466.5 222.4 Q483 219.5 503 221.6 Q518 224 533 238.2 Q538 245 541.3 251.5 Q546 262 544 268 Q541 273.5 532 274 L516 273 L458 265.5 L443.3 261 L430.8 259 Z" fill="#00008a"/>
<!-- web -->
<path d="M503 221.6 L580 233.5 L552 263 Q546 271 538 274 Q546 266 544 260 L541.3 251.5 Q538 245 533 238.2 Q518 224 503 221.6 Z" fill="url(#web)"/>
<path d="M581.1 230.7 L552 263 Q546 271 536 274.5" stroke="#001888" stroke-width="0.7" fill="none"/>
<!-- pin through -->
<path d="M463 266 Q469 254 484.8 253 Q503 254 517.5 272.6 L471 267.4 Z" fill="#0010e0"/>
<path d="M458 265.5 L516 273 L536 274.2" stroke="#0010a0" stroke-width="0.6" fill="none"/>
<!-- arm front face -->
<path d="M440 281.7 Q480 284 540 290 L620 296.5 L620 428 L590 420 Q560 414 537.8 412.5 L487 410 L436.2 406.2 Z" fill="url(#armFace)"/>
<g clip-path="url(#armclip)"><ellipse cx="436" cy="339" rx="82" ry="88" transform="rotate(-39.6 436 339)" fill="url(#band)"/></g>
<!-- front lug end face -->
<path d="M368.3 330.0 C367.8 322.1 370.4 314.0 372.0 308.0 C373.6 302.0 374.0 298.2 378.0 294.0 C382.0 289.8 389.8 284.8 396.0 282.5 C402.2 280.2 408.8 280.2 415.5 280.0 C422.2 279.8 429.4 280.6 436.4 281.2 C443.3 281.9 451.3 282.2 457.2 284.0 C463.1 285.8 467.5 287.8 472.0 292.0 C476.5 296.2 481.1 303.3 484.3 309.0 C487.6 314.7 490.0 320.3 491.5 326.0 C493.0 331.7 493.3 335.8 493.4 343.0 C493.5 350.2 493.9 361.7 492.0 369.0 C490.1 376.3 486.0 381.7 481.7 387.0 C477.4 392.3 471.3 397.9 466.0 401.0 C460.7 404.1 455.0 404.6 450.0 405.5 C445.0 406.4 441.2 407.1 436.2 406.5 C431.2 405.9 425.2 404.2 420.0 402.0 C414.8 399.8 409.9 397.0 405.0 393.0 C400.1 389.0 395.5 384.5 390.5 378.2 C385.5 371.9 378.9 363.4 375.2 355.4 C371.5 347.4 368.8 337.9 368.3 330.0 Z" fill="url(#lugface)"/>
<!-- lug left rim highlight -->

<!-- hole rings -->
<ellipse cx="433" cy="342" rx="32" ry="33" transform="rotate(-40 433 342)" fill="none" stroke="#000078" stroke-width="0.8" opacity="0.7"/>
<ellipse cx="433" cy="342" rx="25" ry="26.5" transform="rotate(-40 433 342)" fill="none" stroke="#000080" stroke-width="1"/>
<path d="M411 316.5 Q425 309 442 312 Q457 318 462 332 Q465 342 462.5 351" stroke="#0014ff" stroke-width="2.6" fill="none"/>
<path d="M409.5 341 Q411 356 421 363 Q429 367.5 436 367" stroke="#0014ff" stroke-width="1.4" fill="none"/>
<ellipse cx="430.6" cy="344.3" rx="14.5" ry="14.5" fill="none" stroke="#00007c" stroke-width="1.2"/>
<ellipse cx="430.6" cy="344.3" rx="11.2" ry="11.3" transform="rotate(-30 430.6 344.3)" fill="url(#hole)"/>
<!-- cylinder body -->
<path d="M600 290 L717 262 L719.5 399 Q718 412 700 419.5 Q672 433 643 434 Q620 431 601.7 425.5 L600 425 Z" fill="url(#armFace)"/>
<path d="M604 421 Q640 429 670 421 Q704 411 718.5 389" stroke="#000080" stroke-width="0.8" fill="none"/><path d="M606 424.5 Q640 432 670 424.5 Q704 414 718.5 393" stroke="#0008d0" stroke-width="1.2" fill="none" opacity="0.6"/><path d="M613 298 V427" stroke="#000088" stroke-width="0.6" opacity="0.6"/>
<!-- flange -->
<ellipse cx="644.3" cy="267" rx="72.7" ry="33" transform="rotate(-3 644.3 267)" fill="#0000c8"/>
<ellipse cx="644.3" cy="263.5" rx="72.7" ry="33" transform="rotate(-3 644.3 263.5)" fill="url(#flange)"/>
<ellipse cx="644.3" cy="263.5" rx="72.7" ry="33" transform="rotate(-3 644.3 263.5)" fill="none" stroke="#00088c" stroke-width="0.7"/><path d="M574 276 Q590 296 644 300.5 Q700 298 717 270" stroke="#000088" stroke-width="0.7" fill="none"/>
<ellipse cx="644.7" cy="266" rx="45.7" ry="18.2" fill="url(#recess)" stroke="#0810a0" stroke-width="0.8"/>
<ellipse cx="646" cy="266.5" rx="40" ry="14.5" fill="none" stroke="#0a18c0" stroke-width="0.7"/>
<!-- boss -->
<ellipse cx="646.5" cy="274" rx="38" ry="10" fill="#0010d8" stroke="#00009a" stroke-width="0.7"/>
<path d="M611.1 214.2 V262 Q613 275 646.5 275 Q680 275 682 262 V214.2 Z" fill="url(#boss)"/>
<path d="M611.1 245 V262 Q613 275 646.5 275 Q680 275 682 262 V245 Z" fill="url(#bossbot)"/>
<ellipse cx="646.5" cy="214.2" rx="35.5" ry="18.2" fill="#0008f0"/>
<clipPath id="cbclip"><ellipse cx="647" cy="215.2" rx="21.9" ry="11.5"/></clipPath><ellipse cx="647" cy="215.2" rx="21.9" ry="11.5" fill="#000080"/><g clip-path="url(#cbclip)"><ellipse cx="647" cy="220" rx="21.5" ry="10.5" fill="#0010e0"/></g>
<ellipse cx="646.8" cy="219.3" rx="12.8" ry="6.3" fill="url(#ihole)"/>
<!-- bottom boss -->
<path d="M611.4 424 V447 Q613 461.4 646.8 461.4 Q680 461.4 682.2 447 V424 Q660 434 643 434 Q625 432 611.4 424 Z" fill="url(#bboss)"/>

<rect x="519.6" y="166.3" width="1.6" height="17.7" fill="#c010c0"/>
<path d="M516.8 183.0 L524.0 183.0 L520.4 189.5 Z" fill="#8a0080"/>
<ellipse cx="520.4" cy="183.0" rx="3.6" ry="1.6" fill="#ff30ff"/>
<rect x="561.2" y="177" width="1.6" height="19.1" fill="#c010c0"/>
<path d="M558.4 195.1 L565.6 195.1 L562.0 201.6 Z" fill="#8a0080"/>
<ellipse cx="562.0" cy="195.1" rx="3.6" ry="1.6" fill="#ff30ff"/>
<rect x="602.5" y="188.6" width="1.6" height="17.5" fill="#c010c0"/>
<path d="M599.7 205.1 L606.9 205.1 L603.3 211.6 Z" fill="#8a0080"/>
<ellipse cx="603.3" cy="205.1" rx="3.6" ry="1.6" fill="#ff30ff"/>
<rect x="449.2" y="235" width="1.6" height="17.5" fill="#c010c0"/>
<path d="M446.4 251.5 L453.6 251.5 L450.0 258.0 Z" fill="#8a0080"/>
<ellipse cx="450.0" cy="251.5" rx="3.6" ry="1.6" fill="#ff30ff"/>
<rect x="490.7" y="245.5" width="1.6" height="17.0" fill="#c010c0"/>
<path d="M487.9 261.5 L495.1 261.5 L491.5 268.0 Z" fill="#8a0080"/>
<ellipse cx="491.5" cy="261.5" rx="3.6" ry="1.6" fill="#ff30ff"/>
<rect x="531.2" y="256.5" width="1.6" height="17.0" fill="#c010c0"/>
<path d="M528.4 272.5 L535.6 272.5 L532.0 279.0 Z" fill="#8a0080"/>
<ellipse cx="532.0" cy="272.5" rx="3.6" ry="1.6" fill="#ff30ff"/>
<rect x="555.2" y="232.5" width="1.6" height="18.0" fill="#c010c0"/>
<path d="M552.4 249.5 L559.6 249.5 L556.0 256.0 Z" fill="#8a0080"/>
<ellipse cx="556.0" cy="249.5" rx="3.6" ry="1.6" fill="#ff30ff"/>
<rect x="578.2" y="211.5" width="1.6" height="16.5" fill="#c010c0"/>
<path d="M575.4 227.0 L582.6 227.0 L579.0 233.5 Z" fill="#8a0080"/>
<ellipse cx="579.0" cy="227.0" rx="3.6" ry="1.6" fill="#ff30ff"/>
<rect x="637.5" y="232.5" width="1.6" height="12" fill="#10b010"/><path d="M641.3 235.9 L649.8 238.7 L641.3 241.3 Z" fill="#18f818"/><ellipse cx="641.5" cy="238.6" rx="1.1" ry="2.7" fill="#30f030"/><path d="M637.8 234.7 L632.3 241.7 L640.3 241.0 Z" fill="#14e814"/><ellipse cx="638.3" cy="241.7" rx="2.5" ry="2.8" fill="#20f020"/><ellipse cx="638.3" cy="236.5" rx="1.6" ry="1.8" fill="#20f020"/>
<rect x="637.5" y="244.4" width="1.6" height="12" fill="#10b010"/><path d="M641.3 247.8 L649.8 250.6 L641.3 253.2 Z" fill="#18f818"/><ellipse cx="641.5" cy="250.5" rx="1.1" ry="2.7" fill="#30f030"/><path d="M637.8 246.6 L632.3 253.6 L640.3 252.9 Z" fill="#14e814"/><ellipse cx="638.3" cy="253.6" rx="2.5" ry="2.8" fill="#20f020"/><ellipse cx="638.3" cy="248.4" rx="1.6" ry="1.8" fill="#20f020"/>
<rect x="637.5" y="256.3" width="1.6" height="12" fill="#10b010"/><path d="M641.3 259.7 L649.8 262.5 L641.3 265.1 Z" fill="#18f818"/><ellipse cx="641.5" cy="262.4" rx="1.1" ry="2.7" fill="#30f030"/><path d="M637.8 258.5 L632.3 265.5 L640.3 264.8 Z" fill="#14e814"/><ellipse cx="638.3" cy="265.5" rx="2.5" ry="2.8" fill="#20f020"/><ellipse cx="638.3" cy="260.3" rx="1.6" ry="1.8" fill="#20f020"/>
<rect x="637.5" y="268" width="1.6" height="12" fill="#10b010"/><path d="M641.3 271.4 L649.8 274.2 L641.3 276.8 Z" fill="#18f818"/><ellipse cx="641.5" cy="274.1" rx="1.1" ry="2.7" fill="#30f030"/><path d="M637.8 270.2 L632.3 277.2 L640.3 276.5 Z" fill="#14e814"/><ellipse cx="638.3" cy="277.2" rx="2.5" ry="2.8" fill="#20f020"/><ellipse cx="638.3" cy="272.0" rx="1.6" ry="1.8" fill="#20f020"/>
<rect x="637.5" y="225" width="1.6" height="60" fill="#18c018"/>
<ellipse cx="638.3" cy="283.5" rx="3" ry="1.5" fill="#28f828"/>
<ellipse cx="638.3" cy="229" rx="2.2" ry="1.6" fill="#28f828"/>
<path d="M611 201 L605 198 L605 204 Z" fill="#28f828"/><ellipse cx="605" cy="201" rx="2" ry="2.6" fill="#20ee20"/><rect x="606" y="200.4" width="5" height="1.2" fill="#18c018"/>
<path d="M610 215 L604 212 L604 218 Z" fill="#28f828"/><ellipse cx="604" cy="215" rx="2" ry="2.6" fill="#20ee20"/><rect x="605" y="214.4" width="5" height="1.2" fill="#18c018"/>
<path d="M610 228 L604 225 L604 231 Z" fill="#28f828"/><ellipse cx="604" cy="228" rx="2" ry="2.6" fill="#20ee20"/><rect x="605" y="227.4" width="5" height="1.2" fill="#18c018"/>
<path d="M610 240 L604 237 L604 243 Z" fill="#28f828"/><ellipse cx="604" cy="240" rx="2" ry="2.6" fill="#20ee20"/><rect x="605" y="239.4" width="5" height="1.2" fill="#18c018"/>
<path d="M614 197 L622 200 L616 204 Z" fill="#28f828"/><path d="M617 196 L617 204" stroke="#18c018" stroke-width="1.3"/><ellipse cx="617" cy="202" rx="2" ry="2.2" fill="#28f828"/><path d="M620 199 L628 198 L625 203 Z" fill="#28f828"/>
<path d="M684 199 L691 202 L684 205 Z" fill="#28f828"/><ellipse cx="684" cy="202" rx="2" ry="2.6" fill="#20ee20"/>
<path d="M686 210 L693 213 L686 216 Z" fill="#28f828"/><ellipse cx="686" cy="213" rx="2" ry="2.6" fill="#20ee20"/>
<path d="M686 221 L693 224 L686 227 Z" fill="#28f828"/><ellipse cx="686" cy="224" rx="2" ry="2.6" fill="#20ee20"/>
<path d="M686 231 L693 234 L686 237 Z" fill="#28f828"/><ellipse cx="686" cy="234" rx="2" ry="2.6" fill="#20ee20"/>
<path d="M685 242 L692 245 L685 248 Z" fill="#28f828"/><ellipse cx="685" cy="245" rx="2" ry="2.6" fill="#20ee20"/>
<path d="M679 195 L679 204" stroke="#18c018" stroke-width="1.3"/><ellipse cx="679" cy="200" rx="2.2" ry="2.5" fill="#28f828"/><ellipse cx="684" cy="198" rx="2.5" ry="2.5" fill="#28f828"/>
<rect x="655.8" y="432" width="1.6" height="12" fill="#10b010"/><path d="M659.6 435.4 L668.1 438.2 L659.6 440.8 Z" fill="#18f818"/><ellipse cx="659.8" cy="438.1" rx="1.1" ry="2.7" fill="#30f030"/><path d="M656.1 434.2 L650.6 441.2 L658.6 440.5 Z" fill="#14e814"/><ellipse cx="656.6" cy="441.2" rx="2.5" ry="2.8" fill="#20f020"/><ellipse cx="656.6" cy="436.0" rx="1.6" ry="1.8" fill="#20f020"/>
<rect x="655.8" y="443" width="1.6" height="12" fill="#10b010"/><path d="M659.6 446.4 L668.1 449.2 L659.6 451.8 Z" fill="#18f818"/><ellipse cx="659.8" cy="449.1" rx="1.1" ry="2.7" fill="#30f030"/><path d="M656.1 445.2 L650.6 452.2 L658.6 451.5 Z" fill="#14e814"/><ellipse cx="656.6" cy="452.2" rx="2.5" ry="2.8" fill="#20f020"/><ellipse cx="656.6" cy="447.0" rx="1.6" ry="1.8" fill="#20f020"/>
<rect x="655.8" y="454" width="1.6" height="12" fill="#10b010"/><path d="M659.6 457.4 L668.1 460.2 L659.6 462.8 Z" fill="#18f818"/><ellipse cx="659.8" cy="460.1" rx="1.1" ry="2.7" fill="#30f030"/><path d="M656.1 456.2 L650.6 463.2 L658.6 462.5 Z" fill="#14e814"/><ellipse cx="656.6" cy="463.2" rx="2.5" ry="2.8" fill="#20f020"/><ellipse cx="656.6" cy="458.0" rx="1.6" ry="1.8" fill="#20f020"/>
<rect x="655.8" y="432" width="1.6" height="37" fill="#10b010"/><ellipse cx="656.6" cy="469.3" rx="2.8" ry="1.8" fill="#28f828"/>
<ellipse cx="600" cy="435" rx="2.4" ry="2.6" fill="#28f828"/><path d="M601 434 L608 432 L607 437 Z" fill="#18f818"/>
<path d="M600 438 L608 441 L602 445 Z" fill="#18f818"/><ellipse cx="606" cy="442" rx="2" ry="2.4" fill="#20ee20"/>
<path d="M601 444 L609 447 L603 451 Z" fill="#18f818"/><ellipse cx="607" cy="448" rx="2" ry="2.4" fill="#20ee20"/>
<path d="M602 449 L610 452 L604 456 Z" fill="#18f818"/><ellipse cx="608" cy="453" rx="2" ry="2.4" fill="#20ee20"/>
<path d="M607 430 L607 452" stroke="#10b010" stroke-width="1.2"/><ellipse cx="610" cy="449" rx="2.2" ry="2.2" fill="#28f828"/>
<path d="M683 428 L691 431 L683 434 Z" fill="#28f828"/>
</svg>
<!-- ============ LEFT PANEL ============ -->
<div class="a" style="left:0;top:84px;width:122px;height:3px;background:#d5dde0"></div>
<div class="a" style="left:0;top:97px;width:122px;height:1px;background:#e6e6e6"></div>
<div class="a" style="left:0;top:87px;width:122px;height:10px;background:#f6f6f6"></div><div class="a" style="left:59px;top:90.5px;width:3.5px;height:3.5px;border-radius:50%;background:#aaa"></div>
<!-- tab icons -->
<div class="a" style="left:1px;top:100px;width:21px;height:14px;background:#f8f8f8;border:1px solid #d8d8d8;border-bottom:none"></div>
<div class="a" style="left:22px;top:100px;width:86px;height:14px;background:#d7d7d7;border-top:1px solid #c8c8c8"></div>
<div class="a" style="left:43px;top:100px;width:1px;height:14px;background:#bdbdbd"></div>
<div class="a" style="left:64px;top:100px;width:1px;height:14px;background:#bdbdbd"></div>
<div class="a" style="left:86px;top:100px;width:1px;height:14px;background:#bdbdbd"></div>
<svg class="a" style="left:7px;top:102px" width="11" height="10" viewBox="0 0 11 10"><path d="M0.5 5 L4 2 L10 4 V7 L6.5 9.5 L0.5 7z" fill="#f0c020" stroke="#b08010" stroke-width="0.6"/><path d="M4.5 1 L9 2.5 V6 L6 7.5 L4.5 6z" fill="#4a9ad8" stroke="#2a6aa0" stroke-width="0.5"/></svg>
<svg class="a" style="left:28px;top:102px" width="10" height="10" viewBox="0 0 10 10"><rect x="0.5" y="0.5" width="9" height="9" fill="#fff" stroke="#2f6d96"/><rect x="0.5" y="0.5" width="9" height="2" fill="#2f6d96"/><rect x="0.5" y="0.5" width="2.5" height="9" fill="#2f6d96"/><path d="M3 5 H9 M3 7.5 H9" stroke="#888" stroke-width="0.6"/></svg>
<svg class="a" style="left:50px;top:102px" width="9" height="10" viewBox="0 0 9 10"><rect x="0.5" y="0.5" width="3" height="9" fill="#fff" stroke="#666" stroke-width="0.7"/><rect x="4.5" y="0.5" width="3" height="4" fill="#fff" stroke="#666" stroke-width="0.7"/><circle cx="6" cy="7.5" r="1.8" fill="#fff" stroke="#666" stroke-width="0.7"/></svg>
<svg class="a" style="left:70px;top:101.5px" width="11" height="11" viewBox="0 0 11 11"><circle cx="5.5" cy="5.5" r="3" fill="none" stroke="#222" stroke-width="1"/><path d="M5.5 0.5 V10.5 M0.5 5.5 H10.5" stroke="#222" stroke-width="1"/></svg>
<svg class="a" style="left:92px;top:101.5px" width="11" height="11" viewBox="0 0 11 11"><path d="M5.5 5.5 L5.5 0.5 A5 5 0 0 0 0.5 5.5z" fill="#3a7ad8"/><path d="M5.5 5.5 L0.5 5.5 A5 5 0 0 0 5.5 10.5z" fill="#2ea84a"/><path d="M5.5 5.5 L5.5 10.5 A5 5 0 0 0 10.5 5.5z" fill="#f0c020"/><path d="M5.5 5.5 L10.5 5.5 A5 5 0 0 0 5.5 0.5z" fill="#e03030"/><path d="M6 1 L9.5 6" stroke="#222" stroke-width="1.2"/></svg>
<svg class="a" style="left:114px;top:103px" width="5" height="8" viewBox="0 0 5 8"><path d="M1 1 L4 4 L1 7" stroke="#333" stroke-width="1.1" fill="none"/></svg>
<!-- filter box 1 -->
<div class="a" style="left:2.5px;top:115px;width:117px;height:16px;background:#f9f9f9;border:1px solid #e2e2e2"></div>
<svg class="a filt" style="left:4px;top:117.5px" width="14" height="11" viewBox="0 0 14 11"><path d="M0.5 0.5 H8.5 L5.5 4.5 V10.5 L3.5 9 V4.5z" fill="#fff" stroke="#666" stroke-width="0.7"/><path d="M0.5 0.5 H8.5 L7.5 2 H1.5z" fill="#4a9ad8"/><path d="M10 8 L13 8 L11.5 9.5z" fill="#444"/></svg>
<!-- tree upper -->
<div class="a" style="left:1px;top:131px;width:111px;height:68px;background:#fafafa"></div>
<div class="a" style="left:0px;top:131px;width:1px;height:82px;background:#e0e0e0"></div>
<div class="a" style="left:116px;top:168px;width:1.5px;height:12px;background:#555"></div>
<div class="a" style="left:12px;top:203.5px;width:24px;height:1.5px;background:#666"></div>
<div class="a" style="left:0;top:212px;width:122px;height:8px;background:#f6f6f6;border-top:1px solid #e2e2e2;border-bottom:1px solid #e6e6e6"></div>
<div class="a" style="left:59px;top:215px;width:3.5px;height:3.5px;border-radius:50%;background:#aaa"></div>
<div class="a" style="left:2.5px;top:222px;width:117px;height:16.5px;background:#f9f9f9;border:1px solid #e2e2e2"></div>
<svg class="a" style="left:4px;top:224.5px" width="14" height="11" viewBox="0 0 14 11"><path d="M0.5 0.5 H8.5 L5.5 4.5 V10.5 L3.5 9 V4.5z" fill="#fff" stroke="#666" stroke-width="0.7"/><path d="M0.5 0.5 H8.5 L7.5 2 H1.5z" fill="#4a9ad8"/><path d="M10 8 L13 8 L11.5 9.5z" fill="#444"/></svg>
<div class="a" style="left:0;top:239px;width:112px;height:310px;background:#fafafa"></div>
<div class="a" style="left:115.5px;top:261px;width:1.5px;height:255px;background:#6a6a6a"></div>
<div class="a" style="left:122px;top:84px;width:1px;height:466px;background:#d6d6d6"></div>
<div class="a" style="left:122px;top:296px;width:6px;height:25px;background:#f3f3f3;border:1px solid #d0d0d0;border-left:none"></div>
<div class="a" style="left:123.5px;top:307px;width:2.5px;height:2.5px;border-radius:50%;border:0.8px solid #999"></div>

<div id="tree" style="position:absolute;left:0;top:0;width:112px;height:550px;overflow:hidden">

<div class="a" style="left:1px;top:131px;width:111px;height:68px;overflow:hidden"><div class="a" style="left:-1px;top:-131px;width:112px;height:300px">
<svg class="a" style="left:17.5px;top:134.9px" width="4" height="6" viewBox="0 0 4 6"><path d="M0.5 0.8 L3.5 3 L0.5 5.2z" fill="#6a6a6a"/></svg>
<svg class="a" style="left:26px;top:132.4px" width="11" height="11" viewBox="0 0 11 11"><path d="M1 5 L3 2 Q4 0.5 5.5 1.5 L9 3 Q10.5 4 9.5 6 L8 9 Q7 10.5 5 9.5 L1.5 8 Q0 7 1 5z" fill="#f0c020" stroke="#a07010" stroke-width="0.7"/><path d="M3 5 L8 6.5" stroke="#a07010" stroke-width="0.6"/></svg>
<div class="a tr" style="left:39px;top:133.3px;color:#222">(-) Expander Wedge</div>
<svg class="a" style="left:17.5px;top:147.9px" width="4" height="6" viewBox="0 0 4 6"><path d="M0.5 0.8 L3.5 3 L0.5 5.2z" fill="#6a6a6a"/></svg>
<svg class="a" style="left:26px;top:145.4px" width="11" height="11" viewBox="0 0 11 11"><path d="M1 5 L3 2 Q4 0.5 5.5 1.5 L9 3 Q10.5 4 9.5 6 L8 9 Q7 10.5 5 9.5 L1.5 8 Q0 7 1 5z" fill="#f0c020" stroke="#a07010" stroke-width="0.7"/><path d="M3 5 L8 6.5" stroke="#a07010" stroke-width="0.6"/></svg>
<div class="a tr" style="left:39px;top:146.3px;color:#222">(-) Expander Wedge</div>
<svg class="a" style="left:26px;top:158.4px" width="11" height="11" viewBox="0 0 11 11"><path d="M2.5 1 Q5 -0.5 7.5 1 V3 H2.5z" fill="#e6e6e6" stroke="#b0b0b0" stroke-width="0.7"/><rect x="3.5" y="3" width="3" height="7" fill="#e6e6e6" stroke="#b0b0b0" stroke-width="0.7"/></svg>
<div class="a tr" style="left:39px;top:159.3px;color:#a8a8a8">(-) Expander Spacer-</div>
<svg class="a" style="left:26px;top:171.1px" width="11" height="11" viewBox="0 0 11 11"><path d="M2.5 1 Q5 -0.5 7.5 1 V3 H2.5z" fill="#e6e6e6" stroke="#b0b0b0" stroke-width="0.7"/><rect x="3.5" y="3" width="3" height="7" fill="#e6e6e6" stroke="#b0b0b0" stroke-width="0.7"/></svg>
<div class="a tr" style="left:39px;top:172.0px;color:#a8a8a8">(-) Expander Spacer-</div>
<svg class="a" style="left:26px;top:183.8px" width="11" height="11" viewBox="0 0 11 11"><path d="M2.5 1 Q5 -0.5 7.5 1 V3 H2.5z" fill="#e6e6e6" stroke="#b0b0b0" stroke-width="0.7"/><rect x="3.5" y="3" width="3" height="7" fill="#e6e6e6" stroke="#b0b0b0" stroke-width="0.7"/></svg>
<div class="a tr" style="left:39px;top:184.7px;color:#a8a8a8">(-) ISO 4017 - M24 x</div>
<svg class="a" style="left:26px;top:196.5px" width="11" height="11" viewBox="0 0 11 11"><path d="M2.5 1 Q5 -0.5 7.5 1 V3 H2.5z" fill="#e6e6e6" stroke="#b0b0b0" stroke-width="0.7"/><rect x="3.5" y="3" width="3" height="7" fill="#e6e6e6" stroke="#b0b0b0" stroke-width="0.7"/></svg>
<div class="a tr" style="left:39px;top:197.4px;color:#a8a8a8">(-) ISO 4017 - M24 x</div>
</div></div>
<div class="a" style="left:0;top:239px;width:112px;height:310px;overflow:hidden"><div class="a" style="left:0;top:-239px;width:112px;height:600px">
<svg class="a" style="left:4px;top:243.8px" width="6" height="4" viewBox="0 0 6 4"><path d="M0.5 0.5 L5.5 0.5 L3 3.5z" fill="#6a6a6a"/></svg>
<svg class="a" style="left:14px;top:240.3px" width="11" height="11" viewBox="0 0 11 11"><path d="M0.5 5 L4 2.5 L9 4.5 V7.5 L5.5 10 L0.5 8z" fill="#f0c020" stroke="#a07010" stroke-width="0.6"/><path d="M3 4 L5.5 7 L10.5 0.5" stroke="#1a9a2a" stroke-width="1.5" fill="none"/></svg>
<div class="a tr" style="left:26.3px;top:241.2px;color:#222">Parts</div>
<svg class="a" style="left:17.5px;top:255.6px" width="4" height="6" viewBox="0 0 4 6"><path d="M0.5 0.8 L3.5 3 L0.5 5.2z" fill="#6a6a6a"/></svg>
<svg class="a" style="left:26.5px;top:253.1px" width="11" height="11" viewBox="0 0 11 11"><path d="M0.8 3 L5 4.3 V10.3 L0.8 9z" fill="#6aaa5a" stroke="#666" stroke-width="0.5"/><path d="M5 4.3 L9.2 3 V9 L5 10.3z" fill="#8cc87c" stroke="#666" stroke-width="0.5"/><path d="M0.8 3 L5 1.7 L9.2 3 L5 4.3z" fill="#c0c0c0" stroke="#666" stroke-width="0.5"/><path d="M3 4.5 L5 7 L10.5 0.5" stroke="#119a22" stroke-width="1.5" fill="none"/></svg>
<svg class="a" style="left:38.5px;top:253.1px" width="11" height="11" viewBox="0 0 11 11"><path d="M5.5 1 Q4.5 6 0.8 9 Q4 10.5 9.8 9.5 Q7 6 6.5 1 Z" fill="#30c8d8" stroke="#1890a0" stroke-width="0.6"/><path d="M6 1.2 Q5.5 6 6 10" stroke="#1890a0" stroke-width="0.6" fill="none"/></svg>
<div class="a tr" style="left:51.4px;top:254.0px;color:#222">EXPANDER PIN-1</div>
<svg class="a" style="left:17.5px;top:268.5px" width="4" height="6" viewBox="0 0 4 6"><path d="M0.5 0.8 L3.5 3 L0.5 5.2z" fill="#6a6a6a"/></svg>
<svg class="a" style="left:26.5px;top:266.0px" width="11" height="11" viewBox="0 0 11 11"><path d="M0.8 3 L5 4.3 V10.3 L0.8 9z" fill="#6aaa5a" stroke="#666" stroke-width="0.5"/><path d="M5 4.3 L9.2 3 V9 L5 10.3z" fill="#8cc87c" stroke="#666" stroke-width="0.5"/><path d="M0.8 3 L5 1.7 L9.2 3 L5 4.3z" fill="#c0c0c0" stroke="#666" stroke-width="0.5"/><path d="M3 4.5 L5 7 L10.5 0.5" stroke="#119a22" stroke-width="1.5" fill="none"/></svg>
<svg class="a" style="left:38.5px;top:266.0px" width="11" height="11" viewBox="0 0 11 11"><path d="M5.5 1 Q4.5 6 0.8 9 Q4 10.5 9.8 9.5 Q7 6 6.5 1 Z" fill="#30c8d8" stroke="#1890a0" stroke-width="0.6"/><path d="M6 1.2 Q5.5 6 6 10" stroke="#1890a0" stroke-width="0.6" fill="none"/></svg>
<div class="a tr" style="left:51.4px;top:266.9px;color:#222">EXPANDER PIN-1</div>
<svg class="a" style="left:17.5px;top:281.3px" width="4" height="6" viewBox="0 0 4 6"><path d="M0.5 0.8 L3.5 3 L0.5 5.2z" fill="#6a6a6a"/></svg>
<svg class="a" style="left:26.5px;top:278.8px" width="11" height="11" viewBox="0 0 11 11"><path d="M0.8 3 L5 4.3 V10.3 L0.8 9z" fill="#6aaa5a" stroke="#666" stroke-width="0.5"/><path d="M5 4.3 L9.2 3 V9 L5 10.3z" fill="#8cc87c" stroke="#666" stroke-width="0.5"/><path d="M0.8 3 L5 1.7 L9.2 3 L5 4.3z" fill="#c0c0c0" stroke="#666" stroke-width="0.5"/><path d="M3 4.5 L5 7 L10.5 0.5" stroke="#119a22" stroke-width="1.5" fill="none"/></svg>
<svg class="a" style="left:38.5px;top:278.8px" width="11" height="11" viewBox="0 0 11 11"><path d="M5.5 1 Q4.5 6 0.8 9 Q4 10.5 9.8 9.5 Q7 6 6.5 1 Z" fill="#30c8d8" stroke="#1890a0" stroke-width="0.6"/><path d="M6 1.2 Q5.5 6 6 10" stroke="#1890a0" stroke-width="0.6" fill="none"/></svg>
<div class="a tr" style="left:51.4px;top:279.7px;color:#222">EXPANDER PIN-1</div>
<svg class="a" style="left:17.5px;top:294.1px" width="4" height="6" viewBox="0 0 4 6"><path d="M0.5 0.8 L3.5 3 L0.5 5.2z" fill="#6a6a6a"/></svg>
<svg class="a" style="left:26.5px;top:291.6px" width="11" height="11" viewBox="0 0 11 11"><path d="M0.8 3 L5 4.3 V10.3 L0.8 9z" fill="#6aaa5a" stroke="#666" stroke-width="0.5"/><path d="M5 4.3 L9.2 3 V9 L5 10.3z" fill="#8cc87c" stroke="#666" stroke-width="0.5"/><path d="M0.8 3 L5 1.7 L9.2 3 L5 4.3z" fill="#c0c0c0" stroke="#666" stroke-width="0.5"/><path d="M3 4.5 L5 7 L10.5 0.5" stroke="#119a22" stroke-width="1.5" fill="none"/></svg>
<svg class="a" style="left:38.5px;top:291.6px" width="11" height="11" viewBox="0 0 11 11"><path d="M5.5 1 Q4.5 6 0.8 9 Q4 10.5 9.8 9.5 Q7 6 6.5 1 Z" fill="#30c8d8" stroke="#1890a0" stroke-width="0.6"/><path d="M6 1.2 Q5.5 6 6 10" stroke="#1890a0" stroke-width="0.6" fill="none"/></svg>
<div class="a tr" style="left:51.4px;top:292.5px;color:#222">EXPANDER PIN-2</div>
<svg class="a" style="left:17.5px;top:306.9px" width="4" height="6" viewBox="0 0 4 6"><path d="M0.5 0.8 L3.5 3 L0.5 5.2z" fill="#6a6a6a"/></svg>
<svg class="a" style="left:26.5px;top:304.4px" width="11" height="11" viewBox="0 0 11 11"><path d="M0.8 3 L5 4.3 V10.3 L0.8 9z" fill="#6aaa5a" stroke="#666" stroke-width="0.5"/><path d="M5 4.3 L9.2 3 V9 L5 10.3z" fill="#8cc87c" stroke="#666" stroke-width="0.5"/><path d="M0.8 3 L5 1.7 L9.2 3 L5 4.3z" fill="#c0c0c0" stroke="#666" stroke-width="0.5"/><path d="M3 4.5 L5 7 L10.5 0.5" stroke="#119a22" stroke-width="1.5" fill="none"/></svg>
<svg class="a" style="left:38.5px;top:304.4px" width="11" height="11" viewBox="0 0 11 11"><path d="M5.5 1 Q4.5 6 0.8 9 Q4 10.5 9.8 9.5 Q7 6 6.5 1 Z" fill="#30c8d8" stroke="#1890a0" stroke-width="0.6"/><path d="M6 1.2 Q5.5 6 6 10" stroke="#1890a0" stroke-width="0.6" fill="none"/></svg>
<div class="a tr" style="left:51.4px;top:305.3px;color:#222">EXPANDER PIN-2</div>
<svg class="a" style="left:17.5px;top:319.8px" width="4" height="6" viewBox="0 0 4 6"><path d="M0.5 0.8 L3.5 3 L0.5 5.2z" fill="#6a6a6a"/></svg>
<svg class="a" style="left:26.5px;top:317.3px" width="11" height="11" viewBox="0 0 11 11"><path d="M0.8 3 L5 4.3 V10.3 L0.8 9z" fill="#6aaa5a" stroke="#666" stroke-width="0.5"/><path d="M5 4.3 L9.2 3 V9 L5 10.3z" fill="#8cc87c" stroke="#666" stroke-width="0.5"/><path d="M0.8 3 L5 1.7 L9.2 3 L5 4.3z" fill="#c0c0c0" stroke="#666" stroke-width="0.5"/><path d="M3 4.5 L5 7 L10.5 0.5" stroke="#119a22" stroke-width="1.5" fill="none"/></svg>
<svg class="a" style="left:38.5px;top:317.3px" width="11" height="11" viewBox="0 0 11 11"><path d="M5.5 1 Q4.5 6 0.8 9 Q4 10.5 9.8 9.5 Q7 6 6.5 1 Z" fill="#30c8d8" stroke="#1890a0" stroke-width="0.6"/><path d="M6 1.2 Q5.5 6 6 10" stroke="#1890a0" stroke-width="0.6" fill="none"/></svg>
<div class="a tr" style="left:51.4px;top:318.2px;color:#222">EXPANDER PIN-2</div>
<svg class="a" style="left:17.5px;top:332.6px" width="4" height="6" viewBox="0 0 4 6"><path d="M0.5 0.8 L3.5 3 L0.5 5.2z" fill="#6a6a6a"/></svg>
<svg class="a" style="left:26.5px;top:330.1px" width="11" height="11" viewBox="0 0 11 11"><path d="M0.8 3 L5 4.3 V10.3 L0.8 9z" fill="#6aaa5a" stroke="#666" stroke-width="0.5"/><path d="M5 4.3 L9.2 3 V9 L5 10.3z" fill="#8cc87c" stroke="#666" stroke-width="0.5"/><path d="M0.8 3 L5 1.7 L9.2 3 L5 4.3z" fill="#c0c0c0" stroke="#666" stroke-width="0.5"/><path d="M3 4.5 L5 7 L10.5 0.5" stroke="#119a22" stroke-width="1.5" fill="none"/></svg>
<svg class="a" style="left:38.5px;top:330.1px" width="11" height="11" viewBox="0 0 11 11"><path d="M5.5 1 Q4.5 6 0.8 9 Q4 10.5 9.8 9.5 Q7 6 6.5 1 Z" fill="#30c8d8" stroke="#1890a0" stroke-width="0.6"/><path d="M6 1.2 Q5.5 6 6 10" stroke="#1890a0" stroke-width="0.6" fill="none"/></svg>
<div class="a tr" style="left:51.4px;top:331.0px;color:#222">Flanged Bronze b</div>
<svg class="a" style="left:17.5px;top:345.4px" width="4" height="6" viewBox="0 0 4 6"><path d="M0.5 0.8 L3.5 3 L0.5 5.2z" fill="#6a6a6a"/></svg>
<svg class="a" style="left:26.5px;top:342.9px" width="11" height="11" viewBox="0 0 11 11"><path d="M0.8 3 L5 4.3 V10.3 L0.8 9z" fill="#6aaa5a" stroke="#666" stroke-width="0.5"/><path d="M5 4.3 L9.2 3 V9 L5 10.3z" fill="#8cc87c" stroke="#666" stroke-width="0.5"/><path d="M0.8 3 L5 1.7 L9.2 3 L5 4.3z" fill="#c0c0c0" stroke="#666" stroke-width="0.5"/><path d="M3 4.5 L5 7 L10.5 0.5" stroke="#119a22" stroke-width="1.5" fill="none"/></svg>
<svg class="a" style="left:38.5px;top:342.9px" width="11" height="11" viewBox="0 0 11 11"><path d="M5.5 1 Q4.5 6 0.8 9 Q4 10.5 9.8 9.5 Q7 6 6.5 1 Z" fill="#30c8d8" stroke="#1890a0" stroke-width="0.6"/><path d="M6 1.2 Q5.5 6 6 10" stroke="#1890a0" stroke-width="0.6" fill="none"/></svg>
<div class="a tr" style="left:51.4px;top:343.8px;color:#222">Flanged Bronze b</div>
<svg class="a" style="left:17.5px;top:358.3px" width="4" height="6" viewBox="0 0 4 6"><path d="M0.5 0.8 L3.5 3 L0.5 5.2z" fill="#6a6a6a"/></svg>
<svg class="a" style="left:26.5px;top:355.8px" width="11" height="11" viewBox="0 0 11 11"><path d="M0.8 3 L5 4.3 V10.3 L0.8 9z" fill="#6aaa5a" stroke="#666" stroke-width="0.5"/><path d="M5 4.3 L9.2 3 V9 L5 10.3z" fill="#8cc87c" stroke="#666" stroke-width="0.5"/><path d="M0.8 3 L5 1.7 L9.2 3 L5 4.3z" fill="#c0c0c0" stroke="#666" stroke-width="0.5"/><path d="M3 4.5 L5 7 L10.5 0.5" stroke="#119a22" stroke-width="1.5" fill="none"/></svg>
<svg class="a" style="left:38.5px;top:355.8px" width="11" height="11" viewBox="0 0 11 11"><path d="M5.5 1 Q4.5 6 0.8 9 Q4 10.5 9.8 9.5 Q7 6 6.5 1 Z" fill="#30c8d8" stroke="#1890a0" stroke-width="0.6"/><path d="M6 1.2 Q5.5 6 6 10" stroke="#1890a0" stroke-width="0.6" fill="none"/></svg>
<div class="a tr" style="left:51.4px;top:356.7px;color:#222">WEAR PLATE Ø6</div>
<svg class="a" style="left:17.5px;top:371.1px" width="4" height="6" viewBox="0 0 4 6"><path d="M0.5 0.8 L3.5 3 L0.5 5.2z" fill="#6a6a6a"/></svg>
<svg class="a" style="left:26.5px;top:368.6px" width="11" height="11" viewBox="0 0 11 11"><path d="M0.8 3 L5 4.3 V10.3 L0.8 9z" fill="#6aaa5a" stroke="#666" stroke-width="0.5"/><path d="M5 4.3 L9.2 3 V9 L5 10.3z" fill="#8cc87c" stroke="#666" stroke-width="0.5"/><path d="M0.8 3 L5 1.7 L9.2 3 L5 4.3z" fill="#c0c0c0" stroke="#666" stroke-width="0.5"/><path d="M3 4.5 L5 7 L10.5 0.5" stroke="#119a22" stroke-width="1.5" fill="none"/></svg>
<svg class="a" style="left:38.5px;top:368.6px" width="11" height="11" viewBox="0 0 11 11"><path d="M5.5 1 Q4.5 6 0.8 9 Q4 10.5 9.8 9.5 Q7 6 6.5 1 Z" fill="#30c8d8" stroke="#1890a0" stroke-width="0.6"/><path d="M6 1.2 Q5.5 6 6 10" stroke="#1890a0" stroke-width="0.6" fill="none"/></svg>
<div class="a tr" style="left:51.4px;top:369.5px;color:#222">WEAR PLATE Ø6</div>
<svg class="a" style="left:17.5px;top:383.9px" width="4" height="6" viewBox="0 0 4 6"><path d="M0.5 0.8 L3.5 3 L0.5 5.2z" fill="#6a6a6a"/></svg>
<svg class="a" style="left:26.5px;top:381.4px" width="11" height="11" viewBox="0 0 11 11"><path d="M0.8 3 L5 4.3 V10.3 L0.8 9z" fill="#6aaa5a" stroke="#666" stroke-width="0.5"/><path d="M5 4.3 L9.2 3 V9 L5 10.3z" fill="#8cc87c" stroke="#666" stroke-width="0.5"/><path d="M0.8 3 L5 1.7 L9.2 3 L5 4.3z" fill="#c0c0c0" stroke="#666" stroke-width="0.5"/><path d="M3 4.5 L5 7 L10.5 0.5" stroke="#119a22" stroke-width="1.5" fill="none"/></svg>
<svg class="a" style="left:38.5px;top:381.4px" width="11" height="11" viewBox="0 0 11 11"><path d="M5.5 1 Q4.5 6 0.8 9 Q4 10.5 9.8 9.5 Q7 6 6.5 1 Z" fill="#30c8d8" stroke="#1890a0" stroke-width="0.6"/><path d="M6 1.2 Q5.5 6 6 10" stroke="#1890a0" stroke-width="0.6" fill="none"/></svg>
<div class="a tr" style="left:51.4px;top:382.3px;color:#222">kNUCKEL-1 (-106</div>
<svg class="a" style="left:4px;top:397.8px" width="6" height="4" viewBox="0 0 6 4"><path d="M0.5 0.5 L5.5 0.5 L3 3.5z" fill="#6a6a6a"/></svg>
<svg class="a" style="left:14px;top:394.3px" width="11" height="11" viewBox="0 0 11 11"><circle cx="4" cy="2.5" r="2.3" fill="#666"/><rect x="2.5" y="3" width="3" height="7" fill="#555"/><path d="M2.5 5 H5.5 M2.5 7 H5.5" stroke="#bbb" stroke-width="0.6"/><rect x="8" y="0.5" width="2" height="10" fill="#3a86c6"/></svg>
<div class="a tr" style="left:26.3px;top:395.2px;color:#222">Connections</div>
<svg class="a" style="left:17.5px;top:409.6px" width="4" height="6" viewBox="0 0 4 6"><path d="M0.5 0.8 L3.5 3 L0.5 5.2z" fill="#6a6a6a"/></svg>
<svg class="a" style="left:26.5px;top:407.1px" width="11" height="11" viewBox="0 0 11 11"><path d="M0.5 7 L5 5 L10 7 L5.5 9.5z" fill="#888" stroke="#444" stroke-width="0.6"/><rect x="3" y="1" width="4.5" height="6" fill="#2a7ac0" stroke="#1a4a80" stroke-width="0.5"/></svg>
<div class="a tr" style="left:38.5px;top:408.0px;color:#222">Component Interacti</div>
<svg class="a" style="left:4px;top:423.4px" width="6" height="4" viewBox="0 0 6 4"><path d="M0.5 0.5 L5.5 0.5 L3 3.5z" fill="#6a6a6a"/></svg>
<svg class="a" style="left:14px;top:419.9px" width="11" height="11" viewBox="0 0 11 11"><path d="M2 2 Q4 0 6 1 L9 3 Q10 5 8.5 7 L5 8 Q2 8 1.5 5z" fill="#e8e8e8" stroke="#777" stroke-width="0.7"/><path d="M0 7 L4 10 M1 6 L6 10 M0 9 L3 11" stroke="#5aa0d8" stroke-width="0.6"/></svg>
<div class="a tr" style="left:26.3px;top:420.8px;color:#222">Fixtures</div>
<svg class="a" style="left:26.5px;top:432.7px" width="11" height="11" viewBox="0 0 11 11"><path d="M1.5 10 L9 2.5 M6 1.5 L9.5 1.5 L9.5 5" stroke="#2a7ac0" stroke-width="1.3" fill="none"/><path d="M1 5 Q1 10 6 10" stroke="#2a7ac0" stroke-width="1.1" fill="none"/></svg>
<div class="a tr" style="left:38.5px;top:433.6px;color:#222">Fixed-1</div>
<svg class="a" style="left:26.5px;top:445.6px" width="11" height="11" viewBox="0 0 11 11"><path d="M5 1 L9 8 H1z" fill="#fff" stroke="#555" stroke-width="0.8"/><rect x="0.5" y="8" width="9" height="1.2" fill="#333"/><circle cx="2" cy="10" r="0.9" fill="#333"/><circle cx="5" cy="10" r="0.9" fill="#333"/><circle cx="8" cy="10" r="0.9" fill="#333"/></svg>
<div class="a tr" style="left:38.5px;top:446.5px;color:#222">Roller/Slider-1</div>
<svg class="a" style="left:4px;top:461.9px" width="6" height="4" viewBox="0 0 6 4"><path d="M0.5 0.5 L5.5 0.5 L3 3.5z" fill="#6a6a6a"/></svg>
<svg class="a" style="left:14px;top:458.4px" width="11" height="11" viewBox="0 0 11 11"><path d="M2 0.5 V8 M0.5 6 L2 8.5 L3.5 6 M0 10 H5" stroke="#1f5f8f" stroke-width="1.1" fill="none"/><path d="M4.5 0.5 V8 M3 6 L4.5 8.5 L6 6" stroke="#1f5f8f" stroke-width="1.1" fill="none"/><rect x="7" y="0.5" width="2" height="7" rx="1" fill="#5a9fd4"/><circle cx="8" cy="8.8" r="1.7" fill="#3a86c6"/></svg>
<div class="a tr" style="left:26.3px;top:459.3px;color:#222">External Loads</div>
<svg class="a" style="left:26.5px;top:471.2px" width="11" height="11" viewBox="0 0 11 11"><path d="M5 0.5 V8 M2.5 5.5 L5 8.5 L7.5 5.5 M0.5 10 H9.5" stroke="#1f5f8f" stroke-width="1.2" fill="none"/></svg>
<div class="a tr" style="left:38.5px;top:472.1px;color:#222">Force-1 (:Per item: 1,</div>
<svg class="a" style="left:4px;top:487.6px" width="6" height="4" viewBox="0 0 6 4"><path d="M0.5 0.5 L5.5 0.5 L3 3.5z" fill="#6a6a6a"/></svg>
<svg class="a" style="left:14px;top:484.1px" width="11" height="11" viewBox="0 0 11 11"><path d="M0.5 6 L4 2 L9.5 3 V7 L5 9.5 L0.5 8z" fill="#888" stroke="#555" stroke-width="0.6"/><path d="M4 4 L6 7 L10 0.5" stroke="#1a9a2a" stroke-width="1.5" fill="none"/></svg>
<div class="a tr" style="left:26.3px;top:485.0px;color:#222">Mesh</div>
<svg class="a" style="left:17.5px;top:499.4px" width="4" height="6" viewBox="0 0 4 6"><path d="M0.5 0.8 L3.5 3 L0.5 5.2z" fill="#6a6a6a"/></svg>
<svg class="a" style="left:26.5px;top:496.9px" width="11" height="11" viewBox="0 0 11 11"><rect x="0.5" y="1.5" width="9.5" height="8.5" fill="#fff" stroke="#555" stroke-width="0.8"/><path d="M0.5 1.5 H4 L5 0.5 H8" stroke="#555" stroke-width="0.8" fill="none"/><rect x="2" y="5.5" width="2" height="3" fill="#e33"/><rect x="4" y="4" width="2" height="4.5" fill="#3b3"/><rect x="6" y="6" width="2.5" height="2.5" fill="#36c"/></svg>
<div class="a tr" style="left:38.5px;top:497.8px;color:#222">Mesh Quality Plot</div>
<svg class="a" style="left:14px;top:509.7px" width="11" height="11" viewBox="0 0 11 11"><rect x="0.5" y="0.5" width="9.5" height="10" fill="#fff" stroke="#777" stroke-width="0.8"/><path d="M3 0.5 V10.5 M0.5 3.5 H10 M0.5 6.5 H10" stroke="#999" stroke-width="0.5"/><path d="M2 7 V10" stroke="#2a6ab0" stroke-width="1"/></svg>
<div class="a tr" style="left:26.3px;top:510.6px;color:#222">Result Options</div>
<svg class="a" style="left:4px;top:526.1px" width="6" height="4" viewBox="0 0 6 4"><path d="M0.5 0.5 L5.5 0.5 L3 3.5z" fill="#6a6a6a"/></svg>
<svg class="a" style="left:14px;top:522.6px" width="11" height="11" viewBox="0 0 11 11"><rect x="0.5" y="1.5" width="9.5" height="8.5" fill="#fff" stroke="#555" stroke-width="0.8"/><path d="M0.5 1.5 H4 L5 0.5 H8" stroke="#555" stroke-width="0.8" fill="none"/><rect x="2" y="5.5" width="2" height="3" fill="#e33"/><rect x="4" y="4" width="2" height="4.5" fill="#3b3"/><rect x="6" y="6" width="2.5" height="2.5" fill="#36c"/></svg>
<div class="a tr" style="left:26.3px;top:523.5px;color:#222;font-weight:bold">Results</div>
<div class="a" style="left:24.5px;top:533.9px;width:86px;height:13.5px;background:#bcd7f0"></div>
<svg class="a" style="left:26.5px;top:535.4px" width="11" height="11" viewBox="0 0 11 11"><defs><linearGradient id="sg" x1="0" y1="0" x2="1" y2="1"><stop offset="0" stop-color="#f22"/><stop offset="0.4" stop-color="#fd0"/><stop offset="0.7" stop-color="#3c3"/><stop offset="1" stop-color="#26f"/></linearGradient></defs><path d="M0.5 3 L5.5 0.5 L10.5 3 V8.5 L5 11 L0.5 8.5z" fill="url(#sg)"/><path d="M4 4.5 L8.5 5.5 L4 8z" fill="#fff" opacity="0.6"/></svg>
<div class="a tr" style="left:38.5px;top:536.3px;color:#222;font-weight:bold">Stress1 (-vonMises-</div>
<svg class="a" style="left:26.5px;top:548.2px" width="11" height="11" viewBox="0 0 11 11"><rect x="0.5" y="0.5" width="9.5" height="10" fill="#fff" stroke="#777" stroke-width="0.8"/><path d="M3 0.5 V10.5 M0.5 3.5 H10 M0.5 6.5 H10" stroke="#999" stroke-width="0.5"/><path d="M2 7 V10" stroke="#2a6ab0" stroke-width="1"/></svg>
<div class="a tr" style="left:38.5px;top:549.1px;color:#222"></div>
</div></div>
</div>
<!-- ============ BOTTOM TABS ============ -->
<div class="a" style="left:0;top:550px;width:1024px;height:14px;background:#f0f0f0"></div>
<div class="a" style="left:0;top:551px;width:1024px;height:1px;background:#c9c9c9"></div>
<div class="a" style="left:1px;top:552px;width:42px;height:11px;background:#b6bacd"></div>
<svg class="a" style="left:1px;top:552px" width="42" height="11" viewBox="0 0 42 11"><g stroke="#9aa0b0" stroke-width="0.8" fill="none"><path d="M10.5 0 V11 M21 0 V11 M31.5 0 V11"/><path d="M3 2.5 V8.5 M7.5 2.5 L4.5 5.5 L7.5 8.5z"/><path d="M16 2.5 L13 5.5 L16 8.5z"/><path d="M25 2.5 L28 5.5 L25 8.5z"/><path d="M35 2.5 L38 5.5 L35 8.5z M39 2.5 V8.5"/></g></svg>
<div class="a" style="left:43px;top:552px;width:41px;height:11px;background:#d5d5d5;border-right:1px solid #bbb"></div>
<div class="a" style="left:84px;top:552px;width:71px;height:11px;background:#d5d5d5;border-right:1px solid #bbb"></div>
<div class="a" style="left:155px;top:551px;width:54px;height:13px;background:#fff;border-right:1px solid #ccc"></div>
<div class="a" style="left:210px;top:552px;width:814px;height:11.5px;background:#f8f8f8;border:1px solid #c8c8c8;border-right:none"></div>
<div class="a bt" style="left:54.5px;top:552.5px">Model</div>
<div class="a bt" style="left:92px;top:552.5px">Motion Study 1</div>
<svg class="a" style="left:160px;top:553px" width="8" height="8" viewBox="0 0 8 8"><path d="M2 0.5 V7 M0.5 5 L2 7 L3.5 5 M5 0.5 V5.5 M4 4 L5 5.5 L6 4" stroke="#444" stroke-width="0.8" fill="none"/></svg>
<div class="a bt" style="left:169px;top:552.5px;font-weight:bold;color:#111">Static 1</div>
<!-- ============ STATUS ============ -->
<div class="a" style="left:0;top:564px;width:1024px;height:12px;background:#f0f0f0;border-top:1px solid #dedede"></div>
<div class="a st" style="left:1px;top:566px">SOLIDWORKS Premium 2025 SP5.0</div>
<div class="a" style="left:756.5px;top:565px;width:1px;height:11px;background:#d8d8d8"></div>
<div class="a st" style="left:766.5px;top:566px">Under Defined</div>
<div class="a st" style="left:828px;top:566px">Editing Assembly</div>
<div class="a st" style="left:966px;top:566px">IPS</div>
<svg class="a" style="left:996px;top:568px" width="5" height="4" viewBox="0 0 5 4"><path d="M0.5 3.5 L2.5 0.5 L4.5 3.5z" fill="#333"/></svg>
<svg class="a" style="left:1013px;top:565.5px" width="10" height="9" viewBox="0 0 10 9"><path d="M1 3 L5 0.8 L9 3 V6 L5 8.2 L1 6z" fill="#ddd" stroke="#666" stroke-width="0.8"/><path d="M1 3 L5 5.2 L9 3 M5 5.2 V8.2" stroke="#666" stroke-width="0.6" fill="none"/></svg>
<div class="a" style="left:0;top:575px;width:1024px;height:1px;background:#8a8a8a"></div>

</body></html>
